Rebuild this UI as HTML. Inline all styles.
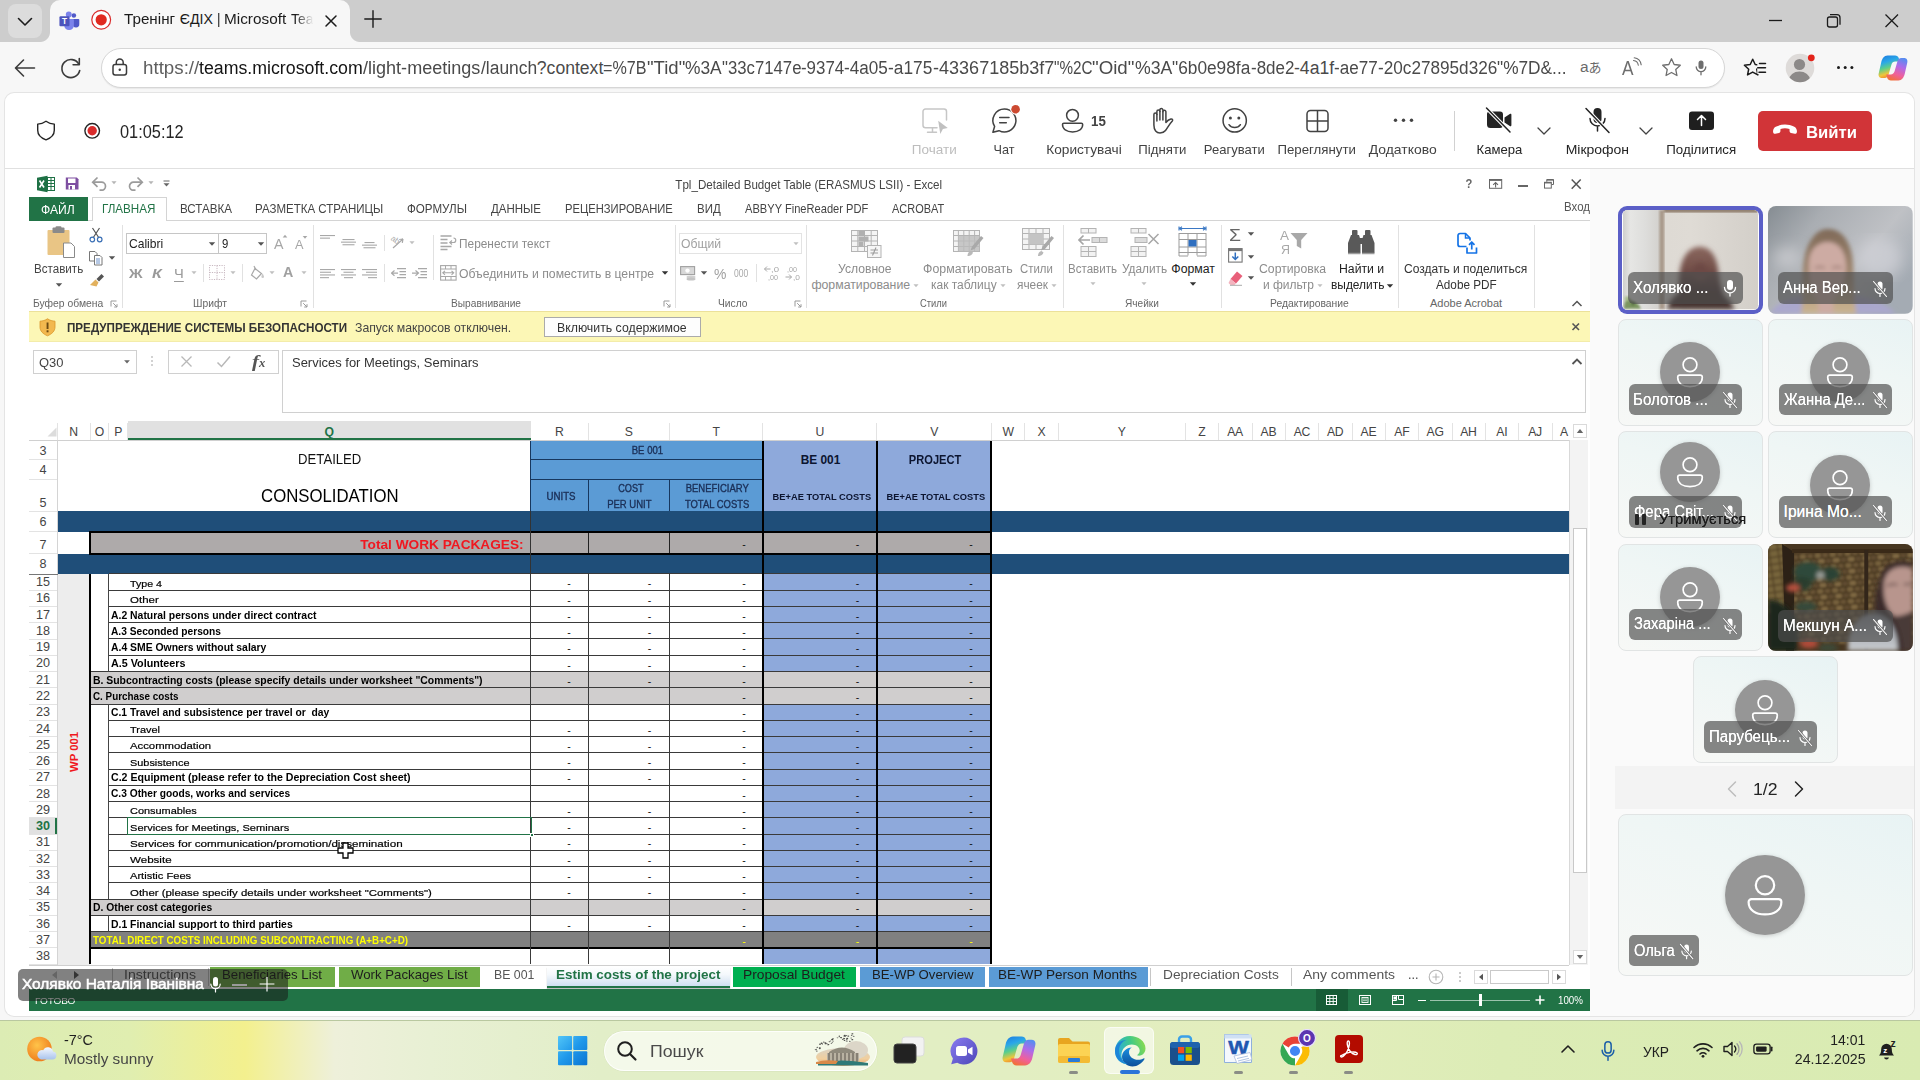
<!DOCTYPE html>
<html lang="uk"><head><meta charset="utf-8"><title>Тренінг ЄДІХ | Microsoft Teams</title>
<style>
html,body{margin:0;padding:0}
body{width:1920px;height:1080px;overflow:hidden;position:relative;background:#d9ebb8;font-family:"Liberation Sans",sans-serif;}
.b{position:absolute;box-sizing:border-box;display:block}
.t{position:absolute;white-space:pre;line-height:1;display:block}
</style></head>
<body>
<!-- s_base -->
<div class="b" style="left:0px;top:1015px;width:1920px;height:65px;background:linear-gradient(90deg,#dcecb4 0px,#e0eeb0 130px,#f3f08e 245px,#eef0da 335px,#e8f0d4 430px,#e2eec8 600px,#e2eec2 1000px,#e3eebc 1300px,#dcecb6 1500px,#d9ebb2 1920px);"></div>
<div class="b" style="left:0px;top:0px;width:1920px;height:42px;background:#cdcdcd;"></div>
<div class="b" style="left:0px;top:42px;width:1920px;height:51px;background:#f7f7f7;"></div>
<div class="b" style="left:0px;top:93px;width:1920px;height:927px;background:#f7f7f7;border-radius:0 0 0 0;"></div>
<div class="b" style="left:50px;top:0px;width:300px;height:42px;background:#f7f7f7;border-radius:10px 10px 0 0;"></div>
<div class="b" style="left:40px;top:32px;width:10px;height:10px;background:radial-gradient(circle at 0 0,#cdcdcd 9.5px,#f7f7f7 10.5px);"></div>
<div class="b" style="left:350px;top:32px;width:10px;height:10px;background:radial-gradient(circle at 100% 0,#cdcdcd 9.5px,#f7f7f7 10.5px);"></div>
<div class="b" style="left:8px;top:4px;width:34px;height:34px;background:#dcdcdc;border-radius:8px;"></div>
<svg class="b" style="left:8px;top:4px;" width="34" height="34" viewBox="0 0 34 34"><path d="M10.5 14.5l6.5 6.5l6.5-6.5" fill="none" stroke="#1b1b1b" stroke-width="1.6" stroke-linecap="round" stroke-linejoin="round"/></svg>
<div class="b" style="left:5px;top:93px;width:1909px;height:923px;background:#fff;border-radius:9px;box-shadow:0 0 0 1px #e4e4e4;"></div>
<div class="b" style="left:0px;top:1020px;width:1920px;height:1px;background:#b9c8a0;"></div>
<!-- s_chrome -->
<svg class="b" style="left:58.5px;top:10.5px;" width="21" height="19.25" viewBox="0 0 24 22"><circle cx="17" cy="5.2" r="2.6" fill="#5059c9"/><path d="M13 9h9.2a1 1 0 0 1 1 1v5.2a3.6 3.6 0 0 1-3.6 3.6h-.4a3.6 3.6 0 0 1-3.600-3.600z" fill="#5059c9"/>
<circle cx="11.2" cy="4" r="3.4" fill="#7b83eb"/><path d="M6.500 9h9.500a1 1 0 0 1 1 1v6.500a5.200 5.200 0 0 1-5.200 5.200h-.6a5.200 5.200 0 0 1-5.200-5.200v-6.500a1 1 0 0 1 .5-1z" fill="#7b83eb"/>
<rect x="0.500" y="6" width="11.500" height="11.500" rx="1.300" fill="#4b53bc"/><text x="6.200" y="15.300" font-size="9.500" font-weight="bold" fill="#fff" text-anchor="middle" font-family="Liberation Sans,sans-serif">T</text></svg>
<svg class="b" style="left:90px;top:9px;" width="22" height="22" viewBox="0 0 22 22"><circle cx="11.200" cy="10.800" r="9.400" fill="#fff" stroke="#d92c2c" stroke-width="1.200"/><circle cx="11.200" cy="10.800" r="5.600" fill="#e02a20"/></svg>
<span class="t" style="left:124.40px;top:12px;font-size:14.2px;color:#1b1b1b;transform:scaleX(1.0719);transform-origin:0 0;">Тренінг </span>
<span class="t" style="left:179.75px;top:12px;font-size:14.2px;color:#1b1b1b;">ЄДІХ </span>
<span class="t" style="left:216.90px;top:12px;font-size:14.2px;color:#1b1b1b;transform:scaleX(0.9432);transform-origin:0 0;">| </span>
<span class="t" style="left:224.10px;top:12px;font-size:14.2px;color:#1b1b1b;transform:scaleX(1.0805);transform-origin:0 0;">Microsoft </span>
<span class="t" style="left:290.60px;top:12px;font-size:14.2px;color:#1b1b1b;transform:scaleX(0.9784);transform-origin:0 0;-webkit-mask-image:linear-gradient(90deg,#000 20%,transparent 100%);mask-image:linear-gradient(90deg,#000 20%,transparent 100%);">Tea</span>
<svg class="b" style="left:322px;top:12px;" width="18" height="18" viewBox="0 0 18 18"><path d="M4 4l10 10M14 4l-10 10" stroke="#1b1b1b" stroke-width="1.500" stroke-linecap="round"/></svg>
<svg class="b" style="left:362px;top:8.3px;" width="22" height="22" viewBox="0 0 22 22"><path d="M11 2.800v16.400M2.800 11h16.400" stroke="#1b1b1b" stroke-width="1.400" stroke-linecap="round"/></svg>
<svg class="b" style="left:1760px;top:8px;" width="150" height="26" viewBox="0 0 150 26"><path d="M9 12.500h13" stroke="#1b1b1b" stroke-width="1.300"/><rect x="67.500" y="9" width="10" height="10" rx="2" fill="none" stroke="#1b1b1b" stroke-width="1.300"/><path d="M70 6.700h7a3 3 0 0 1 3 3v7" fill="none" stroke="#1b1b1b" stroke-width="1.300"/><path d="M125.500 6.500l12.500 12.500M138 6.500l-12.500 12.500" stroke="#1b1b1b" stroke-width="1.300"/></svg>
<svg class="b" style="left:12px;top:55px;" width="28" height="26" viewBox="0 0 28 26"><path d="M22.500 13h-18.500M11.500 5l-8 8l8 8" fill="none" stroke="#3b3b3b" stroke-width="1.600" stroke-linecap="round" stroke-linejoin="round"/></svg>
<svg class="b" style="left:57px;top:54px;" width="28" height="28" viewBox="0 0 28 28"><path d="M21.800 10.200a9 9 0 1 0 .9 6.300" fill="none" stroke="#3b3b3b" stroke-width="1.600" stroke-linecap="round"/><path d="M22.300 4.500v6.200h-6.200" fill="none" stroke="#3b3b3b" stroke-width="1.600" stroke-linecap="round" stroke-linejoin="round"/></svg>
<div class="b" style="left:101px;top:48px;width:1624px;height:40px;background:#fff;border-radius:20px;border:1px solid #d6d6d6;box-shadow:0 1px 1px rgba(0,0,0,.06);"></div>
<svg class="b" style="left:110px;top:57px;" width="20" height="20" viewBox="0 0 20 20"><rect x="3" y="7.500" width="13.500" height="10.500" rx="2.200" fill="none" stroke="#3b3b3b" stroke-width="1.500"/><path d="M6.300 7.500v-2a3.450 3.450 0 0 1 6.900 0v2" fill="none" stroke="#3b3b3b" stroke-width="1.500"/><circle cx="9.750" cy="12.800" r="1.200" fill="#3b3b3b"/></svg>
<span class="t" style="left:143.10px;top:60px;font-size:17.6px;color:#5f5f5f;transform:scaleX(1.0658);transform-origin:0 0;">https://</span>
<span class="t" style="left:199.40px;top:60px;font-size:17.6px;color:#141414;transform:scaleX(1.0089);transform-origin:0 0;">teams.microsoft.com</span>
<span class="t" style="left:363.20px;top:60px;font-size:17.6px;color:#4a4a4a;transform:scaleX(1.0257);transform-origin:0 0;">/light-meetings</span>
<span class="t" style="left:480.60px;top:60px;font-size:17.6px;color:#4a4a4a;transform:scaleX(0.9902);transform-origin:0 0;">/launch</span>
<span class="t" style="left:536.80px;top:60px;font-size:17.6px;color:#4a4a4a;">?context</span>
<span class="t" style="left:603.20px;top:60px;font-size:17.6px;color:#4a4a4a;transform:scaleX(0.9167);transform-origin:0 0;">=%7B</span>
<span class="t" style="left:646.70px;top:60px;font-size:17.6px;color:#4a4a4a;transform:scaleX(1.0553);transform-origin:0 0;">"Tid"</span>
<span class="t" style="left:685.00px;top:60px;font-size:17.6px;color:#4a4a4a;transform:scaleX(0.9872);transform-origin:0 0;">%3A</span>
<span class="t" style="left:721.70px;top:60px;font-size:17.6px;color:#4a4a4a;transform:scaleX(0.9513);transform-origin:0 0;">"33c7147e</span>
<span class="t" style="left:801.20px;top:60px;font-size:17.6px;color:#4a4a4a;transform:scaleX(0.9597);transform-origin:0 0;">-9374</span>
<span class="t" style="left:844.40px;top:60px;font-size:17.6px;color:#4a4a4a;transform:scaleX(0.9730);transform-origin:0 0;">-4a05</span>
<span class="t" style="left:888.20px;top:60px;font-size:17.6px;color:#4a4a4a;transform:scaleX(0.9841);transform-origin:0 0;">-a175</span>
<span class="t" style="left:932.50px;top:60px;font-size:17.6px;color:#4a4a4a;transform:scaleX(1.0251);transform-origin:0 0;">-43367185b3f7</span>
<span class="t" style="left:1053.90px;top:60px;font-size:17.6px;color:#4a4a4a;transform:scaleX(0.8672);transform-origin:0 0;">"%2C</span>
<span class="t" style="left:1092.40px;top:60px;font-size:17.6px;color:#4a4a4a;transform:scaleX(1.0631);transform-origin:0 0;">"Oid"</span>
<span class="t" style="left:1134.80px;top:60px;font-size:17.6px;color:#4a4a4a;transform:scaleX(1.0060);transform-origin:0 0;">%3A</span>
<span class="t" style="left:1172.20px;top:60px;font-size:17.6px;color:#4a4a4a;transform:scaleX(0.9830);transform-origin:0 0;">"6b0e98fa</span>
<span class="t" style="left:1250.50px;top:60px;font-size:17.6px;color:#4a4a4a;transform:scaleX(0.9663);transform-origin:0 0;">-8de2</span>
<span class="t" style="left:1294.00px;top:60px;font-size:17.6px;color:#4a4a4a;">-4a1f</span>
<span class="t" style="left:1334.00px;top:60px;font-size:17.6px;color:#4a4a4a;transform:scaleX(0.9708);transform-origin:0 0;">-ae77</span>
<span class="t" style="left:1377.70px;top:60px;font-size:17.6px;color:#4a4a4a;transform:scaleX(0.9752);transform-origin:0 0;">-20c27895d326</span>
<span class="t" style="left:1497.00px;top:60px;font-size:17.6px;color:#4a4a4a;transform:scaleX(0.9816);transform-origin:0 0;">"%7D&amp;...</span>
<span class="t" style="left:1580.00px;top:59px;font-size:15.5px;color:#6a6a6a;">a</span>
<span class="t" style="left:1588.50px;top:61px;font-size:13px;color:#6a6a6a;font-family:'Liberation Sans','Noto Sans CJK JP',sans-serif;">あ</span>
<span class="t" style="left:1622.00px;top:59px;font-size:19.5px;color:#6e6e6e;transform:scaleX(0.8841);transform-origin:0 0;">A</span>
<svg class="b" style="left:1631px;top:57px;" width="12" height="12" viewBox="0 0 12 12"><path d="M2.500 3.500a5.500 5.500 0 0 1 4.800 4.800M3.200 .8a8.300 8.300 0 0 1 7 7" fill="none" stroke="#6e6e6e" stroke-width="1.100" stroke-linecap="round"/></svg>
<svg class="b" style="left:1660px;top:56px;" width="23" height="23" viewBox="0 0 23 23"><path d="M11.500 2.800l2.650 5.700l6.150.75l-4.550 4.200l1.200 6.100l-5.450-3.050l-5.450 3.050l1.200-6.100l-4.550-4.200l6.150-.75z" fill="none" stroke="#6e6e6e" stroke-width="1.300" stroke-linejoin="round"/></svg>
<svg class="b" style="left:1692px;top:58px;" width="18" height="20" viewBox="0 0 18 20"><rect x="6.500" y="2.500" width="5" height="8.500" rx="2.500" fill="#6e6e6e"/><path d="M4.200 8.800a4.800 4.800 0 0 0 9.600 0M9 13.800v3" fill="none" stroke="#6e6e6e" stroke-width="1.300" stroke-linecap="round"/></svg>
<svg class="b" style="left:1743px;top:56px;" width="26" height="24" viewBox="0 0 26 24"><path d="M9.700 3.200l2.500 5.300l5.800.7l-4.300 4l1.150 5.750l-5.150-2.850l-5.150 2.850l1.150-5.750l-4.300-4l5.800-.7z" fill="none" stroke="#1b1b1b" stroke-width="1.500" stroke-linejoin="round"/><rect x="14.300" y="4.500" width="9" height="13.500" fill="#f7f7f7"/><path d="M16.500 7.400h6M14.800 11.800h7.700M16 16.200h6.500" stroke="#1b1b1b" stroke-width="1.500" stroke-linecap="round"/></svg>
<svg class="b" style="left:1785px;top:53px;" width="30" height="30" viewBox="0 0 30 30"><defs><clipPath id="pc"><circle cx="15" cy="15" r="14.300"/></clipPath></defs><circle cx="15" cy="15" r="14.300" fill="#dedbd9"/><g clip-path="url(#pc)"><circle cx="14.500" cy="11.500" r="5.600" fill="#8c8988"/><ellipse cx="14.500" cy="27" rx="10.500" ry="8.500" fill="#8c8988"/></g><circle cx="26.300" cy="4.800" r="3.400" fill="#e3241b"/></svg>
<svg class="b" style="left:1835px;top:62px;" width="20" height="10" viewBox="0 0 20 10"><circle cx="3.500" cy="5.500" r="1.500" fill="#1b1b1b"/><circle cx="10.200" cy="5.500" r="1.500" fill="#1b1b1b"/><circle cx="16.900" cy="5.500" r="1.500" fill="#1b1b1b"/></svg>
<svg class="b" style="left:1878px;top:54px;" width="30" height="28" viewBox="0 0 30 28"><defs><linearGradient id="cg1" x1=".2" y1="0" x2=".5" y2="1"><stop offset="0" stop-color="#1f7fe0"/><stop offset=".3" stop-color="#2aa7e8"/><stop offset=".55" stop-color="#5ccf8a"/><stop offset=".8" stop-color="#f0c53a"/><stop offset="1" stop-color="#f07a2a"/></linearGradient><linearGradient id="cg2" x1=".7" y1="0" x2=".3" y2="1"><stop offset="0" stop-color="#5a8cf0"/><stop offset=".35" stop-color="#b06ae8"/><stop offset=".7" stop-color="#f0609a"/><stop offset="1" stop-color="#f2703a"/></linearGradient></defs>
<path d="M9.500 1.500h7.500c2 0 3.200 1 3.800 2.800l1 3.200h-4.500c-2 0-3.300 1.200-3.900 3.200l-2.800 9.800c-.6 2-1.800 3.500-4 3.500h-2.600c-2.800 0-4-2.200-3.200-5l2.500-11c.8-3.200 2.800-6.500 6.200-6.500z" fill="url(#cg1)"/>
<path d="M20.500 26.500h-7.500c-2 0-3.200-1-3.800-2.800l-1-3.200h4.500c2 0 3.300-1.200 3.900-3.200l2.800-9.800c.6-2 1.800-3.500 4-3.500h2.600c2.800 0 4 2.200 3.200 5l-2.500 11c-.8 3.200-2.800 6.500-6.200 6.500z" fill="url(#cg2)"/></svg>
<!-- s_teams -->
<div class="b" style="left:5px;top:168px;width:1909px;height:1px;background:#e0e0e0;"></div>
<svg class="b" style="left:34px;top:118px;" width="24" height="24" viewBox="0 0 24 24"><path d="M12 3.200c2.600 1.900 5.300 2.700 8.300 2.900v6.200c0 4.600-3.400 7.800-8.300 9.500c-4.900-1.700-8.300-4.900-8.300-9.500v-6.200c3-.2 5.700-1 8.300-2.900z" fill="none" stroke="#242424" stroke-width="1.400" stroke-linejoin="round"/></svg>
<svg class="b" style="left:82px;top:121px;" width="20" height="20" viewBox="0 0 20 20"><circle cx="10.200" cy="9.800" r="7.300" fill="#fff" stroke="#242424" stroke-width="1.400"/><circle cx="10.200" cy="9.800" r="4.700" fill="#d92c2c"/></svg>
<span class="t" style="left:119.70px;top:123px;font-size:18px;color:#242424;transform:scaleX(0.9077);transform-origin:0 0;">01:05:12</span>
<svg class="b" style="left:920px;top:106px;" width="30" height="30" viewBox="0 0 30 30"><path d="M17 21.700h-11.500a2.500 2.500 0 0 1-2.500-2.500v-13.700a2.500 2.500 0 0 1 2.500-2.500h18.500a2.500 2.500 0 0 1 2.500 2.500v8.500" fill="none" stroke="#c6c6c6" stroke-width="1.500" stroke-linecap="round"/><path d="M12.500 22v4M7.500 26.300h9" stroke="#c6c6c6" stroke-width="1.500" stroke-linecap="round"/><path d="M18.200 14.800l9.600 7.300l-4.900 .8l-2.600 5z" fill="#c0c0c0"/></svg>
<span class="t" style="left:912.22px;top:143px;font-size:13.4px;color:#bdbdbd;transform:scaleX(1.0100);transform-origin:50% 0;">Почати</span>
<svg class="b" style="left:989px;top:104px;" width="34" height="32" viewBox="0 0 34 32"><path d="M15.400 5a11.500 11.500 0 1 1-5.400 21.650l-6.100 1.600l1.700-5.800a11.500 11.500 0 0 1 9.800-17.450z" fill="none" stroke="#424242" stroke-width="1.500" stroke-linejoin="round"/><path d="M10.700 13.500h9.300M10.700 18.800h6.600" stroke="#424242" stroke-width="1.500" stroke-linecap="round"/><circle cx="26.600" cy="5.300" r="5.400" fill="#fff"/><circle cx="26.600" cy="5.300" r="4.300" fill="#cc4a31"/></svg>
<span class="t" style="left:992.89px;top:143px;font-size:13.4px;color:#424242;transform:scaleX(0.9448);transform-origin:50% 0;">Чат</span>
<svg class="b" style="left:1058px;top:106px;" width="30" height="30" viewBox="0 0 30 30"><circle cx="14.500" cy="9.300" r="5.900" fill="none" stroke="#424242" stroke-width="1.500"/><path d="M5.900 17.200h17.400a1.400 1.400 0 0 1 1.400 1.400c0 4.500-4 7.400-10.100 7.400s-10.100-2.900-10.100-7.400a1.400 1.400 0 0 1 1.400-1.400z" fill="none" stroke="#424242" stroke-width="1.500"/></svg>
<span class="t" style="left:1090.50px;top:114px;font-size:14px;color:#424242;font-weight:bold;transform:scaleX(0.9504);transform-origin:0 0;">15</span>
<span class="t" style="left:1046.71px;top:143px;font-size:13.4px;color:#424242;transform:scaleX(1.0207);transform-origin:50% 0;">Користувачі</span>
<svg class="b" style="left:1150px;top:105px;" width="26" height="30" viewBox="0 0 26 30"><path d="M3.900 20V9.600a1.500 1.500 0 0 1 3 0V6.400a1.500 1.500 0 0 1 3 0V5a1.500 1.500 0 0 1 3 0V6.800a1.500 1.500 0 0 1 3 0V17.500c1.300-1.700 3-3 5-3.500c1.500-.3 2.200 .9 1.400 2c-3 3.200-4.500 6.500-6.800 9.500c-1.300 1.700-3 2.400-5.500 2.400c-3.500 0-6.100-2.500-6.100-7.900z" fill="none" stroke="#424242" stroke-width="1.500" stroke-linejoin="round"/><path d="M6.900 9.600V16M9.900 6.400V15M12.900 6.800V15" stroke="#424242" stroke-width="1.500" stroke-linecap="round"/></svg>
<span class="t" style="left:1138.15px;top:143px;font-size:13.4px;color:#424242;transform:scaleX(0.9855);transform-origin:50% 0;">Підняти</span>
<svg class="b" style="left:1219px;top:106px;" width="32" height="32" viewBox="0 0 32 32"><circle cx="15.700" cy="14.400" r="11.650" fill="none" stroke="#424242" stroke-width="1.500"/><circle cx="11.400" cy="12.100" r="1.500" fill="#424242"/><circle cx="19.800" cy="12.100" r="1.500" fill="#424242"/><path d="M10 18.700c1.300 1.900 3.300 2.900 5.700 2.900s4.400-1 5.700-2.900" fill="none" stroke="#424242" stroke-width="1.500" stroke-linecap="round"/></svg>
<span class="t" style="left:1203.20px;top:143px;font-size:13.4px;color:#424242;transform:scaleX(0.9746);transform-origin:50% 0;">Реагувати</span>
<svg class="b" style="left:1302px;top:106px;" width="32" height="32" viewBox="0 0 32 32"><rect x="5" y="4.500" width="21" height="21" rx="3.500" fill="none" stroke="#424242" stroke-width="1.500"/><path d="M15.500 4.500v21M5 15h21" stroke="#424242" stroke-width="1.500"/></svg>
<span class="t" style="left:1277.31px;top:143px;font-size:13.4px;color:#424242;transform:scaleX(0.9889);transform-origin:50% 0;">Переглянути</span>
<svg class="b" style="left:1392px;top:114px;" width="24" height="12" viewBox="0 0 24 12"><circle cx="3.500" cy="6.300" r="1.700" fill="#424242"/><circle cx="11.500" cy="6.300" r="1.700" fill="#424242"/><circle cx="19.500" cy="6.300" r="1.700" fill="#424242"/></svg>
<span class="t" style="left:1370.31px;top:143px;font-size:13.4px;color:#424242;transform:scaleX(1.0400);transform-origin:50% 0;">Додатково</span>
<div class="b" style="left:1453.5px;top:111px;width:1px;height:40px;background:#d1d1d1;"></div>
<svg class="b" style="left:1484px;top:105px;" width="32" height="30" viewBox="0 0 32 30"><path d="M5.500 6.500h10.500a3 3 0 0 1 3 3v10.500a3 3 0 0 1-3 3h-9.500a3.500 3.500 0 0 1-3.500-3.500v-10.500a2.500 2.500 0 0 1 2.500-2.500z" fill="#242424"/><path d="M20.500 12.500l5.300-3.600a1 1 0 0 1 1.600.8v10.600a1 1 0 0 1-1.600.8l-5.300-3.600z" fill="#242424"/><path d="M2.500 3l23.500 24" stroke="#fff" stroke-width="3.600" stroke-linecap="round"/><path d="M2.500 3l23.500 24" stroke="#242424" stroke-width="1.500" stroke-linecap="round"/></svg>
<span class="t" style="left:1475.99px;top:143px;font-size:13.4px;color:#242424;transform:scaleX(0.9780);transform-origin:50% 0;">Камера</span>
<svg class="b" style="left:1536px;top:125px;" width="16" height="12" viewBox="0 0 16 12"><path d="M2 3l6 6l6-6" fill="none" stroke="#424242" stroke-width="1.300" stroke-linecap="round" stroke-linejoin="round"/></svg>
<svg class="b" style="left:1582px;top:105px;" width="32" height="30" viewBox="0 0 32 30"><rect x="11.500" y="3" width="8" height="15" rx="4" fill="#242424"/><path d="M8 13.500a7.500 7.500 0 0 0 15 0M15.500 21v5" fill="none" stroke="#242424" stroke-width="1.500" stroke-linecap="round"/><path d="M4 3.500l23 24" stroke="#fff" stroke-width="3.600" stroke-linecap="round"/><path d="M4 3.500l23 24" stroke="#242424" stroke-width="1.500" stroke-linecap="round"/></svg>
<span class="t" style="left:1567.21px;top:143px;font-size:13.4px;color:#242424;transform:scaleX(1.0447);transform-origin:50% 0;">Мікрофон</span>
<svg class="b" style="left:1638px;top:125px;" width="16" height="12" viewBox="0 0 16 12"><path d="M2 3l6 6l6-6" fill="none" stroke="#424242" stroke-width="1.300" stroke-linecap="round" stroke-linejoin="round"/></svg>
<svg class="b" style="left:1688px;top:110px;" width="28" height="22" viewBox="0 0 28 22"><rect x="1" y="1.500" width="25" height="18.500" rx="3" fill="#1f1f1f"/><path d="M13.500 15.500v-9.500M9.500 9.500l4-4l4 4" fill="none" stroke="#fff" stroke-width="1.500" stroke-linecap="round" stroke-linejoin="round"/></svg>
<span class="t" style="left:1666.47px;top:143px;font-size:13.4px;color:#242424;transform:scaleX(0.9933);transform-origin:50% 0;">Поділитися</span>
<div class="b" style="left:1758px;top:111px;width:114px;height:40px;background:#d13438;border-radius:5px;"></div>
<svg class="b" style="left:1771px;top:119px;" width="30" height="22" viewBox="0 0 30 22"><path d="M2.200 13.500c-.5-2.200.3-4.500 2.500-5.700c6-3 12.600-3 18.600 0c2.200 1.200 3 3.500 2.500 5.700c-.2 1-1.100 1.500-2.100 1.300l-3.700-.9c-.8-.2-1.400-.9-1.400-1.700l-.1-2.100c-2.900-1-6.100-1-9 0l-.1 2.100c0 .8-.6 1.500-1.400 1.700l-3.700.9c-1 .2-1.900-.3-2.100-1.300z" fill="#fff"/></svg>
<span class="t" style="left:1806.00px;top:125px;font-size:16.6px;color:#fff;font-weight:bold;transform:scaleX(1.0052);transform-origin:0 0;">Вийти</span>
<!-- s_excel_top -->
<div class="b" style="left:29px;top:173px;width:1561px;height:838px;background:#fff;"></div>
<svg class="b" style="left:36px;top:175px;" width="20" height="18" viewBox="0 0 20 18"><path d="M1 2.800l10.500-2v16.400l-10.500-2z" fill="#1e7145"/><rect x="11.500" y="2.500" width="7" height="13" fill="#fff" stroke="#1e7145" stroke-width="1"/><path d="M12 5.500h6M12 8.500h6M12 11.500h6M15 3v12" stroke="#1e7145" stroke-width="1"/><path d="M3.500 5.500l4.500 7M8 5.500l-4.500 7" stroke="#fff" stroke-width="1.600"/></svg>
<svg class="b" style="left:65px;top:177px;" width="14" height="13" viewBox="0 0 14 13"><path d="M.8.500h11l1.700 1.700v10.300h-12.700z" fill="#7e4fa1"/><rect x="3" y="1.500" width="7.500" height="4.500" fill="#fff"/><rect x="3.500" y="8" width="6.500" height="4.500" fill="#fff"/><rect x="5" y="9" width="2" height="3.500" fill="#7e4fa1"/></svg>
<svg class="b" style="left:91px;top:176px;" width="17" height="15" viewBox="0 0 17 15"><path d="M2 6.200h8.500a4 4 0 0 1 0 8h-2" fill="none" stroke="#9b9b9b" stroke-width="1.700"/><path d="M6.500 1.500l-4.800 4.700l4.800 4.700" fill="none" stroke="#9b9b9b" stroke-width="1.700"/></svg>
<svg class="b" style="left:109.6px;top:180.3px;" width="8" height="6" viewBox="0 0 8 6"><path d="M1.4399999999999995 1.300h5.120000000000001l-2.5600000000000005 2.8600000000000003z" fill="#b5b5b5"/></svg>
<svg class="b" style="left:127px;top:176px;" width="17" height="15" viewBox="0 0 17 15"><path d="M15 6.200h-8.500a4 4 0 0 0 0 8h2" fill="none" stroke="#9b9b9b" stroke-width="1.700"/><path d="M10.500 1.500l4.800 4.700l-4.800 4.700" fill="none" stroke="#9b9b9b" stroke-width="1.700"/></svg>
<svg class="b" style="left:146.6px;top:180.3px;" width="8" height="6" viewBox="0 0 8 6"><path d="M1.4399999999999995 1.300h5.120000000000001l-2.5600000000000005 2.8600000000000003z" fill="#b5b5b5"/></svg>
<svg class="b" style="left:162px;top:180px;" width="9" height="8" viewBox="0 0 9 8"><path d="M1.500 1h6" stroke="#666" stroke-width="1"/><path d="M1.500 3.300h6l-3 3.200z" fill="#666"/></svg>
<span class="t" style="left:671.70px;top:180px;font-size:11.9px;color:#444;transform:scaleX(0.9758);transform-origin:50% 0;">Tpl_Detailed Budget Table (ERASMUS LSII) - Excel</span>
<span class="t" style="left:1464.79px;top:178px;font-size:12.8px;color:#666;font-weight:bold;transform:scaleX(0.8697);transform-origin:50% 0;">?</span>
<svg class="b" style="left:1489px;top:179px;" width="14" height="10" viewBox="0 0 14 10"><rect x=".5" y=".5" width="12.200" height="8.800" fill="none" stroke="#666"/><path d="M.5 1.200h12.200" stroke="#666" stroke-width="1.400"/><path d="M6.600 8.500v-4.800M4.200 5.800l2.400-2.300l2.400 2.300" fill="none" stroke="#666" stroke-width="1.100"/></svg>
<div class="b" style="left:1517.5px;top:185px;width:10px;height:1.9px;background:#666;"></div>
<svg class="b" style="left:1544px;top:179px;" width="11" height="10" viewBox="0 0 11 10"><path d="M2.800 2.800v-2.300h6.700v5h-2" fill="none" stroke="#666"/><path d="M2.800 1h6.700" stroke="#666" stroke-width="1.300"/><rect x=".5" y="3.300" width="6.800" height="5.800" fill="#fff" stroke="#666"/><path d="M.5 3.800h6.800" stroke="#666" stroke-width="1.300"/></svg>
<svg class="b" style="left:1570px;top:177.5px;" width="12" height="12" viewBox="0 0 12 12"><path d="M1.700 1.500l9 9.200M10.700 1.500l-9 9.200" stroke="#555" stroke-width="1.500"/></svg>
<div class="b" style="left:29px;top:220px;width:1561px;height:1px;background:#d4d4d4;"></div>
<div class="b" style="left:29px;top:197px;width:58.8px;height:23.7px;background:#217346;"></div>
<div class="b" style="left:92px;top:197px;width:75px;height:24px;background:#fff;border:1px solid #d4d4d4;border-bottom:none;"></div>
<span class="t" style="left:41.20px;top:205px;font-size:11.9px;color:#fff;transform:scaleX(1.0216);transform-origin:0 0;">ФАЙЛ</span>
<span class="t" style="left:102.00px;top:204px;font-size:11.9px;color:#217346;transform:scaleX(0.9783);transform-origin:0 0;">ГЛАВНАЯ</span>
<span class="t" style="left:179.60px;top:204px;font-size:11.9px;color:#444;transform:scaleX(0.9764);transform-origin:0 0;">ВСТАВКА</span>
<span class="t" style="left:255.00px;top:204px;font-size:11.9px;color:#444;transform:scaleX(0.9686);transform-origin:0 0;">РАЗМЕТКА СТРАНИЦЫ</span>
<span class="t" style="left:407.00px;top:204px;font-size:11.9px;color:#444;transform:scaleX(0.9752);transform-origin:0 0;">ФОРМУЛЫ</span>
<span class="t" style="left:490.80px;top:204px;font-size:11.9px;color:#444;transform:scaleX(0.9679);transform-origin:0 0;">ДАННЫЕ</span>
<span class="t" style="left:564.60px;top:204px;font-size:11.9px;color:#444;transform:scaleX(0.9428);transform-origin:0 0;">РЕЦЕНЗИРОВАНИЕ</span>
<span class="t" style="left:696.70px;top:204px;font-size:11.9px;color:#444;transform:scaleX(0.9654);transform-origin:0 0;">ВИД</span>
<span class="t" style="left:744.60px;top:204px;font-size:11.9px;color:#444;transform:scaleX(0.9344);transform-origin:0 0;">ABBYY FineReader PDF</span>
<span class="t" style="left:891.70px;top:204px;font-size:11.9px;color:#444;transform:scaleX(0.9233);transform-origin:0 0;">ACROBAT</span>
<span class="t" style="left:1563.70px;top:201px;font-size:12.2px;color:#555;transform:scaleX(0.9420);transform-origin:0 0;">Вход</span>
<div class="b" style="left:122.4px;top:225px;width:1px;height:83px;background:#e1e1e1;"></div>
<div class="b" style="left:313px;top:225px;width:1px;height:83px;background:#e1e1e1;"></div>
<div class="b" style="left:674.8px;top:225px;width:1px;height:83px;background:#e1e1e1;"></div>
<div class="b" style="left:806px;top:225px;width:1px;height:83px;background:#e1e1e1;"></div>
<div class="b" style="left:1062.6px;top:225px;width:1px;height:83px;background:#e1e1e1;"></div>
<div class="b" style="left:1221.4px;top:225px;width:1px;height:83px;background:#e1e1e1;"></div>
<div class="b" style="left:1398.2px;top:225px;width:1px;height:83px;background:#e1e1e1;"></div>
<div class="b" style="left:1533.5px;top:225px;width:1px;height:83px;background:#e1e1e1;"></div>
<svg class="b" style="left:46px;top:226px;" width="30" height="33" viewBox="0 0 30 33"><rect x="1.500" y="4" width="22" height="25" rx="1" fill="#e9c585"/><rect x="6.500" y="1.500" width="12" height="5.500" rx="1" fill="#8a8a8a"/><rect x="9.500" y=".3" width="6" height="3" rx="1.200" fill="#8a8a8a"/><path d="M17.500 17h7.500l3.500 3.500v11h-11z" fill="#fff" stroke="#8a8a8a" stroke-width="1"/></svg>
<span class="t" style="left:34.20px;top:263px;font-size:12.3px;color:#444;transform:scaleX(0.9436);transform-origin:0 0;">Вставить</span>
<svg class="b" style="left:55px;top:281.5px;" width="8" height="6" viewBox="0 0 8 6"><path d="M0.7999999999999998 1.300h6.4l-3.2 3.5z" fill="#555"/></svg>
<svg class="b" style="left:89px;top:227px;" width="14" height="16" viewBox="0 0 14 16"><path d="M3.500 1l6.500 10M10.500 1l-6.500 10" stroke="#555" stroke-width="1.200"/><circle cx="3.300" cy="12.500" r="2.300" fill="none" stroke="#3a6fb5" stroke-width="1.200"/><circle cx="10.700" cy="12.500" r="2.300" fill="none" stroke="#3a6fb5" stroke-width="1.200"/></svg>
<svg class="b" style="left:88px;top:250px;" width="16" height="16" viewBox="0 0 16 16"><path d="M1.500 1.500h5.500l2 2v7.500h-7.500z" fill="#fff" stroke="#777" stroke-width="1"/><path d="M6.500 5.500h5.500l2 2v7.500h-7.500z" fill="#fff" stroke="#777" stroke-width="1"/><path d="M8 9h4M8 11h4M8 13h4" stroke="#5b87c5" stroke-width=".9"/></svg>
<svg class="b" style="left:108px;top:255px;" width="8" height="6" viewBox="0 0 8 6"><path d="M0.7999999999999998 1.300h6.4l-3.2 3.5z" fill="#555"/></svg>
<svg class="b" style="left:89px;top:273px;" width="16" height="15" viewBox="0 0 16 15"><path d="M12.500 1l2.500 2.500l-5 5l-2.500-2.500z" fill="#555"/><path d="M6.500 6.500l3 3l-2 4l-6.500-1.500z" fill="#e2b15d"/></svg>
<span class="t" style="left:32.50px;top:298px;font-size:11px;color:#666;transform:scaleX(0.9392);transform-origin:0 0;">Буфер обмена</span>
<svg class="b" style="left:110px;top:300px;" width="8" height="8" viewBox="0 0 8 8"><path d="M1 1h5.500M1 1v5.500" stroke="#999" stroke-width="1" fill="none"/><path d="M3.200 3.200l3.800 3.800M7 4.200v2.800h-2.800" stroke="#999" stroke-width="1" fill="none"/></svg>
<div class="b" style="left:126px;top:232.5px;width:92.5px;height:21.5px;background:#fff;border:1px solid #c6c6c6;"></div>
<div class="b" style="left:217.5px;top:232.5px;width:49.5px;height:21.5px;background:#fff;border:1px solid #c6c6c6;"></div>
<span class="t" style="left:128.70px;top:238px;font-size:12.2px;color:#222;transform:scaleX(0.9891);transform-origin:0 0;">Calibri</span>
<svg class="b" style="left:207.9px;top:240.5px;" width="8" height="6" viewBox="0 0 8 6"><path d="M0.7999999999999998 1.300h6.4l-3.2 3.5z" fill="#555"/></svg>
<span class="t" style="left:221.70px;top:238px;font-size:12.2px;color:#222;transform:scaleX(0.9285);transform-origin:0 0;">9</span>
<svg class="b" style="left:256.6px;top:240.5px;" width="8" height="6" viewBox="0 0 8 6"><path d="M0.7999999999999998 1.300h6.4l-3.2 3.5z" fill="#555"/></svg>
<span class="t" style="left:273.80px;top:236px;font-size:15px;color:#a6a6a6;transform:scaleX(0.9495);transform-origin:0 0;">A</span>
<svg class="b" style="left:282px;top:234px;" width="6" height="5" viewBox="0 0 6 5"><path d="M3 .8l2.300 2.800h-4.600z" fill="#a6a6a6"/></svg>
<span class="t" style="left:294.60px;top:238px;font-size:13.5px;color:#a6a6a6;transform:scaleX(0.9439);transform-origin:0 0;">A</span>
<svg class="b" style="left:302px;top:235px;" width="6" height="5" viewBox="0 0 6 5"><path d="M3 3.800l2.300-2.800h-4.600z" fill="#a6a6a6"/></svg>
<span class="t" style="left:129.40px;top:267px;font-size:13.5px;color:#9a9a9a;font-weight:bold;transform:scaleX(1.1146);transform-origin:0 0;">Ж</span>
<span class="t" style="left:152.40px;top:267px;font-size:13.5px;color:#9a9a9a;font-weight:bold;font-style:italic;transform:scaleX(1.1808);transform-origin:0 0;">К</span>
<span class="t" style="left:173.80px;top:267px;font-size:13.5px;color:#9a9a9a;transform:scaleX(1.0892);transform-origin:0 0;border-bottom:1.300px solid #9a9a9a;padding-bottom:0;">Ч</span>
<svg class="b" style="left:190px;top:270px;" width="8" height="6" viewBox="0 0 8 6"><path d="M1.4399999999999995 1.300h5.120000000000001l-2.5600000000000005 2.8600000000000003z" fill="#c0c0c0"/></svg>
<div class="b" style="left:203px;top:264px;width:1px;height:18px;background:#e1e1e1;"></div>
<svg class="b" style="left:209px;top:265px;" width="16" height="15" viewBox="0 0 16 15"><rect x=".5" y=".5" width="15" height="14" fill="none" stroke="#c8b8c0" stroke-dasharray="1.200 1.200"/><path d="M8 .5v14M.5 7.500h15" stroke="#c8b8c0" stroke-dasharray="1.200 1.200"/></svg>
<svg class="b" style="left:228.6px;top:270px;" width="8" height="6" viewBox="0 0 8 6"><path d="M1.4399999999999995 1.300h5.120000000000001l-2.5600000000000005 2.8600000000000003z" fill="#c0c0c0"/></svg>
<div class="b" style="left:242px;top:264px;width:1px;height:18px;background:#e1e1e1;"></div>
<svg class="b" style="left:250px;top:265px;" width="15" height="15" viewBox="0 0 15 15"><path d="M5 3.500l6.500 5l-5 5.500l-5-4z" fill="none" stroke="#a8a8a8" stroke-width="1.200"/><path d="M4 1l2 4" stroke="#a8a8a8" stroke-width="1.200"/><path d="M12.500 8.500c1 1.500 1.500 2.500 1.500 3.300a1.300 1.300 0 0 1-2.600 0c0-.8.300-1.800 1.100-3.300z" fill="#c9c9c9"/></svg>
<svg class="b" style="left:268px;top:270px;" width="8" height="6" viewBox="0 0 8 6"><path d="M1.4399999999999995 1.300h5.120000000000001l-2.5600000000000005 2.8600000000000003z" fill="#c0c0c0"/></svg>
<span class="t" style="left:283.20px;top:264px;font-size:15px;color:#a0a0a0;font-weight:bold;transform:scaleX(0.9508);transform-origin:0 0;">A</span>
<svg class="b" style="left:299.7px;top:270px;" width="8" height="6" viewBox="0 0 8 6"><path d="M1.4399999999999995 1.300h5.120000000000001l-2.5600000000000005 2.8600000000000003z" fill="#c0c0c0"/></svg>
<span class="t" style="left:192.80px;top:298px;font-size:11px;color:#666;transform:scaleX(0.9367);transform-origin:0 0;">Шрифт</span>
<svg class="b" style="left:300.4px;top:300px;" width="8" height="8" viewBox="0 0 8 8"><path d="M1 1h5.500M1 1v5.500" stroke="#999" stroke-width="1" fill="none"/><path d="M3.200 3.200l3.800 3.800M7 4.200v2.800h-2.800" stroke="#999" stroke-width="1" fill="none"/></svg>
<svg class="b" style="left:320px;top:235px;" width="15" height="7.2" viewBox="0 0 15 7.2"><rect x="0" y="0.0" width="15" height="1.100" fill="#a8a8a8"/><rect x="0" y="2.6" width="10" height="1.100" fill="#a8a8a8"/></svg>
<svg class="b" style="left:341px;top:239px;" width="15" height="9.8" viewBox="0 0 15 9.8"><rect x="1.5" y="0.0" width="12" height="1.100" fill="#a8a8a8"/><rect x="0.0" y="2.6" width="15" height="1.100" fill="#a8a8a8"/><rect x="1.5" y="5.2" width="12" height="1.100" fill="#a8a8a8"/></svg>
<svg class="b" style="left:362.4px;top:242px;" width="15" height="9.8" viewBox="0 0 15 9.8"><rect x="2.5" y="0.0" width="10" height="1.100" fill="#a8a8a8"/><rect x="0.0" y="2.6" width="15" height="1.100" fill="#a8a8a8"/><rect x="1.5" y="5.2" width="12" height="1.100" fill="#a8a8a8"/></svg>
<div class="b" style="left:383.5px;top:235px;width:1px;height:16px;background:#e1e1e1;"></div>
<div class="b" style="left:383.5px;top:264px;width:1px;height:18px;background:#e1e1e1;"></div>
<svg class="b" style="left:390px;top:233px;" width="16" height="17" viewBox="0 0 16 17"><text x="0" y="9" font-size="8" fill="#a8a8a8" font-family="Liberation Sans,sans-serif" transform="rotate(35 4 8)">ab</text><path d="M3 15l10-9M13 6l-3.800.5M13 6l-.7 3.800" stroke="#a8a8a8" stroke-width="1.200" fill="none"/></svg>
<svg class="b" style="left:408px;top:240px;" width="8" height="6" viewBox="0 0 8 6"><path d="M1.4399999999999995 1.300h5.120000000000001l-2.5600000000000005 2.8600000000000003z" fill="#c0c0c0"/></svg>
<svg class="b" style="left:320px;top:269px;" width="15" height="12.8" viewBox="0 0 15 12.8"><rect x="0" y="0.0" width="15" height="1.100" fill="#a8a8a8"/><rect x="0" y="2.7" width="11" height="1.100" fill="#a8a8a8"/><rect x="0" y="5.4" width="15" height="1.100" fill="#a8a8a8"/><rect x="0" y="8.100000000000001" width="9" height="1.100" fill="#a8a8a8"/></svg>
<svg class="b" style="left:341px;top:269px;" width="15" height="12.8" viewBox="0 0 15 12.8"><rect x="0.0" y="0.0" width="15" height="1.100" fill="#a8a8a8"/><rect x="2.5" y="2.7" width="10" height="1.100" fill="#a8a8a8"/><rect x="0.0" y="5.4" width="15" height="1.100" fill="#a8a8a8"/><rect x="3.0" y="8.100000000000001" width="9" height="1.100" fill="#a8a8a8"/></svg>
<svg class="b" style="left:362.4px;top:269px;" width="15" height="12.8" viewBox="0 0 15 12.8"><rect x="0" y="0.0" width="15" height="1.100" fill="#a8a8a8"/><rect x="4" y="2.7" width="11" height="1.100" fill="#a8a8a8"/><rect x="0" y="5.4" width="15" height="1.100" fill="#a8a8a8"/><rect x="6" y="8.100000000000001" width="9" height="1.100" fill="#a8a8a8"/></svg>
<svg class="b" style="left:391px;top:268px;" width="15" height="11" viewBox="0 0 15 11"><path d="M6 .6h9M8.500 3.600h6.500M8.500 6.600h6.500M6 9.600h9" stroke="#a8a8a8" stroke-width="1.100"/><path d="M7 5.100h-6.500M3.500 2.500l-3 2.600l3 2.600" stroke="#a8a8a8" stroke-width="1.200" fill="none"/></svg>
<svg class="b" style="left:411.6px;top:268px;" width="15" height="11" viewBox="0 0 15 11"><path d="M6 .6h9M8.500 3.600h6.500M8.500 6.600h6.500M6 9.600h9" stroke="#a8a8a8" stroke-width="1.100"/><path d="M0 5.100h6.500M3.500 2.500l3 2.600l-3 2.600" stroke="#a8a8a8" stroke-width="1.200" fill="none"/></svg>
<div class="b" style="left:433px;top:235px;width:1px;height:45px;background:#e1e1e1;"></div>
<svg class="b" style="left:440px;top:235px;" width="17" height="16" viewBox="0 0 17 16"><path d="M.5 1h11M.5 4.500h7M.5 8h7M.5 11.500h11M.5 14.500h7" stroke="#a8a8a8" stroke-width="1.300"/><path d="M10 7.500h3.500a2 2 0 0 0 0-4.500M12 5.500l-2.200 2l2.200 2" fill="none" stroke="#a8a8a8" stroke-width="1.200"/></svg>
<span class="t" style="left:458.60px;top:238px;font-size:12.3px;color:#8c8c8c;transform:scaleX(0.9651);transform-origin:0 0;">Перенести текст</span>
<svg class="b" style="left:440px;top:265px;" width="17" height="16" viewBox="0 0 17 16"><rect x=".6" y=".6" width="15.500" height="14.500" fill="none" stroke="#a8a8a8" stroke-width="1.100"/><path d="M.6 4h15.500M.6 11.500h15.500M5.500.6v3.400M11 .6v3.400M5.500 11.500v3.600M11 11.500v3.600" stroke="#a8a8a8" stroke-width="1"/><path d="M3 7.800h10.500M5 5.800l-2.200 2l2.200 2M11.500 5.800l2.200 2l-2.200 2" stroke="#a8a8a8" stroke-width="1.100" fill="none"/></svg>
<span class="t" style="left:458.60px;top:268px;font-size:12.3px;color:#8c8c8c;transform:scaleX(0.9922);transform-origin:0 0;">Объединить и поместить в центре</span>
<svg class="b" style="left:660.7px;top:270px;" width="8" height="6" viewBox="0 0 8 6"><path d="M0.7999999999999998 1.300h6.4l-3.2 3.5z" fill="#333"/></svg>
<span class="t" style="left:451.40px;top:298px;font-size:11px;color:#666;transform:scaleX(0.9245);transform-origin:0 0;">Выравнивание</span>
<svg class="b" style="left:662.9px;top:300px;" width="8" height="8" viewBox="0 0 8 8"><path d="M1 1h5.500M1 1v5.500" stroke="#999" stroke-width="1" fill="none"/><path d="M3.200 3.200l3.800 3.800M7 4.200v2.800h-2.800" stroke="#999" stroke-width="1" fill="none"/></svg>
<div class="b" style="left:679.3px;top:232.5px;width:122.5px;height:21.5px;background:#fff;border:1px solid #e3e3e3;"></div>
<span class="t" style="left:681.20px;top:238px;font-size:12.3px;color:#a0a0a0;transform:scaleX(0.9908);transform-origin:0 0;">Общий</span>
<svg class="b" style="left:791.6px;top:240.5px;" width="8" height="6" viewBox="0 0 8 6"><path d="M1.4399999999999995 1.300h5.120000000000001l-2.5600000000000005 2.8600000000000003z" fill="#c0c0c0"/></svg>
<svg class="b" style="left:680px;top:266px;" width="18" height="15" viewBox="0 0 18 15"><rect x=".6" y=".6" width="14" height="8" fill="#d8d8d8" stroke="#a0a0a0" stroke-width="1.100"/><circle cx="7.500" cy="4.600" r="2.200" fill="#fff"/><ellipse cx="11" cy="11" rx="4.500" ry="1.500" fill="#d0d0d0"/><ellipse cx="11" cy="13" rx="4.500" ry="1.500" fill="#c4c4c4"/></svg>
<svg class="b" style="left:700.4px;top:270px;" width="8" height="6" viewBox="0 0 8 6"><path d="M0.7999999999999998 1.300h6.4l-3.2 3.5z" fill="#555"/></svg>
<span class="t" style="left:714.30px;top:267px;font-size:14.5px;color:#a0a0a0;transform:scaleX(0.9618);transform-origin:0 0;">%</span>
<span class="t" style="left:734.40px;top:269px;font-size:10px;color:#a8a8a8;transform:scaleX(0.8511);transform-origin:0 0;">000</span>
<div class="b" style="left:756px;top:264px;width:1px;height:18px;background:#e1e1e1;"></div>
<span class="t" style="left:771.00px;top:266px;font-size:7.5px;color:#a8a8a8;transform:scaleX(1.2790);transform-origin:0 0;">,0</span>
<span class="t" style="left:768.00px;top:274px;font-size:7.5px;color:#a8a8a8;transform:scaleX(0.9591);transform-origin:0 0;">,00</span>
<svg class="b" style="left:764px;top:266px;" width="7" height="6" viewBox="0 0 7 6"><path d="M6.500 3h-6M3 .5l-2.500 2.500l2.500 2.500" stroke="#a8a8a8" fill="none"/></svg>
<span class="t" style="left:787.00px;top:266px;font-size:7.5px;color:#a8a8a8;transform:scaleX(0.9591);transform-origin:0 0;">,00</span>
<span class="t" style="left:793.00px;top:274px;font-size:7.5px;color:#a8a8a8;transform:scaleX(1.1191);transform-origin:0 0;">,0</span>
<svg class="b" style="left:785px;top:274px;" width="7" height="6" viewBox="0 0 7 6"><path d="M.5 3h6M4 .5l2.500 2.500l-2.500 2.500" stroke="#a8a8a8" fill="none"/></svg>
<span class="t" style="left:718.00px;top:298px;font-size:11px;color:#666;transform:scaleX(0.9325);transform-origin:0 0;">Число</span>
<svg class="b" style="left:793.8px;top:300px;" width="8" height="8" viewBox="0 0 8 8"><path d="M1 1h5.500M1 1v5.500" stroke="#999" stroke-width="1" fill="none"/><path d="M3.200 3.200l3.800 3.800M7 4.200v2.800h-2.800" stroke="#999" stroke-width="1" fill="none"/></svg>
<svg class="b" style="left:851px;top:230px;" width="31" height="29" viewBox="0 0 31 29"><rect x=".5" y=".5" width="26" height="21" fill="#f4f4f4" stroke="#b4b4b4"/><path d="M6.8 .5v21" stroke="#b4b4b4"/><path d="M13.5 .5v21" stroke="#b4b4b4"/><path d="M20.2 .5v21" stroke="#b4b4b4"/><path d="M.5 5.5h26" stroke="#b4b4b4"/><path d="M.5 11.0h26" stroke="#b4b4b4"/><path d="M.5 16.5h26" stroke="#b4b4b4"/><rect x="7.500" y="1" width="6.500" height="5" fill="#b0b0b0"/><rect x="7.500" y="6.500" width="10" height="5" fill="#b0b0b0"/><rect x="7.500" y="12" width="5" height="5" fill="#b0b0b0"/><rect x="16.500" y="15.500" width="13.500" height="12" fill="#f6f6f6" stroke="#b4b4b4"/><path d="M19.500 20h7.500M19.500 23h7.500M25 17.500l-3.500 8" stroke="#9c9c9c" stroke-width="1.100"/></svg>
<span class="t" style="left:838.30px;top:263px;font-size:12.3px;color:#8c8c8c;transform:scaleX(0.9870);transform-origin:0 0;">Условное</span>
<span class="t" style="left:811.40px;top:279px;font-size:12.3px;color:#8c8c8c;">форматирование</span>
<svg class="b" style="left:912px;top:282.5px;" width="8" height="6" viewBox="0 0 8 6"><path d="M1.4399999999999995 1.300h5.120000000000001l-2.5600000000000005 2.8600000000000003z" fill="#c0c0c0"/></svg>
<svg class="b" style="left:953px;top:230px;" width="33" height="29" viewBox="0 0 33 29"><rect x=".5" y=".5" width="26" height="21" fill="#f4f4f4" stroke="#b4b4b4"/><path d="M5.4 .5v21" stroke="#b4b4b4"/><path d="M10.8 .5v21" stroke="#b4b4b4"/><path d="M16.2 .5v21" stroke="#b4b4b4"/><path d="M21.6 .5v21" stroke="#b4b4b4"/><path d="M.5 5.5h26" stroke="#b4b4b4"/><path d="M.5 11.0h26" stroke="#b4b4b4"/><path d="M.5 16.5h26" stroke="#b4b4b4"/><rect x="6" y="6" width="20.500" height="15.500" fill="#bcbcbc" opacity=".8"/><path d="M30.500 8l-9 11l-4 1.500l1.500-4l9-10.500z" fill="#a9a9a9"/><path d="M18 21c-2 .5-3.500 2-3.500 5c2.500 0 5-1 5.500-3.500z" fill="#b9b9b9"/></svg>
<span class="t" style="left:922.50px;top:263px;font-size:12.3px;color:#8c8c8c;transform:scaleX(1.0050);transform-origin:0 0;">Форматировать</span>
<span class="t" style="left:931.30px;top:279px;font-size:12.3px;color:#8c8c8c;transform:scaleX(0.9753);transform-origin:0 0;">как таблицу</span>
<svg class="b" style="left:998.8px;top:282.5px;" width="8" height="6" viewBox="0 0 8 6"><path d="M1.4399999999999995 1.300h5.120000000000001l-2.5600000000000005 2.8600000000000003z" fill="#c0c0c0"/></svg>
<svg class="b" style="left:1022px;top:228px;" width="34" height="31" viewBox="0 0 34 31"><rect x=".5" y=".5" width="27" height="21" fill="#f4f4f4" stroke="#b4b4b4"/><path d="M7.0 .5v21" stroke="#b4b4b4"/><path d="M14.0 .5v21" stroke="#b4b4b4"/><path d="M21.0 .5v21" stroke="#b4b4b4"/><path d="M.5 5.5h27" stroke="#b4b4b4"/><path d="M.5 11.0h27" stroke="#b4b4b4"/><path d="M.5 16.5h27" stroke="#b4b4b4"/><rect x="6.500" y="5.500" width="15" height="11" fill="#c4c4c4"/><path d="M32 10l-9 11l-4 1.500l1.500-4l9-10.500z" fill="#a9a9a9"/><path d="M19.500 23c-2 .5-3.500 2-3.500 5c2.500 0 5-1 5.500-3.500z" fill="#b9b9b9"/></svg>
<span class="t" style="left:1020.30px;top:263px;font-size:12.3px;color:#8c8c8c;transform:scaleX(0.9256);transform-origin:0 0;">Стили</span>
<span class="t" style="left:1017.30px;top:279px;font-size:12.3px;color:#8c8c8c;transform:scaleX(0.9648);transform-origin:0 0;">ячеек</span>
<svg class="b" style="left:1049.8px;top:282.5px;" width="8" height="6" viewBox="0 0 8 6"><path d="M1.4399999999999995 1.300h5.120000000000001l-2.5600000000000005 2.8600000000000003z" fill="#c0c0c0"/></svg>
<span class="t" style="left:920.30px;top:298px;font-size:11px;color:#666;transform:scaleX(0.8488);transform-origin:0 0;">Стили</span>
<svg class="b" style="left:1078px;top:228px;" width="30" height="29" viewBox="0 0 30 29"><rect x="3" y=".5" width="15" height="4.500" fill="#f2f2f2" stroke="#b4b4b4"/><path d="M10.500 .5v4.500" stroke="#b4b4b4"/><rect x="14" y="9.500" width="15" height="5" fill="#dcdcdc" stroke="#b4b4b4"/><path d="M21.500 9.500v5" stroke="#b4b4b4"/><rect x="3" y="18.500" width="15" height="10" fill="#f2f2f2" stroke="#b4b4b4"/><path d="M10.500 18.500v10M3 23.500h15" stroke="#b4b4b4"/><path d="M12 12h-10.500M5.500 7.500l-4.500 4.500l4.500 4.500" fill="none" stroke="#a6a6a6" stroke-width="1.700"/></svg>
<span class="t" style="left:1068.30px;top:263px;font-size:12.3px;color:#8c8c8c;transform:scaleX(0.9398);transform-origin:0 0;">Вставить</span>
<svg class="b" style="left:1089px;top:281px;" width="8" height="6" viewBox="0 0 8 6"><path d="M1.4399999999999995 1.300h5.120000000000001l-2.5600000000000005 2.8600000000000003z" fill="#c0c0c0"/></svg>
<svg class="b" style="left:1130px;top:228px;" width="30" height="29" viewBox="0 0 30 29"><rect x="1" y=".5" width="15" height="4.500" fill="#f2f2f2" stroke="#b4b4b4"/><path d="M8.500 .5v4.500" stroke="#b4b4b4"/><rect x="5" y="9.500" width="12" height="5" fill="#dcdcdc" stroke="#b4b4b4"/><rect x="1" y="18.500" width="15" height="10" fill="#f2f2f2" stroke="#b4b4b4"/><path d="M8.500 18.500v10M1 23.500h15" stroke="#b4b4b4"/><path d="M18.500 6l10 10M28.500 6l-10 10" stroke="#a6a6a6" stroke-width="1.500"/></svg>
<span class="t" style="left:1121.70px;top:263px;font-size:12.3px;color:#8c8c8c;transform:scaleX(0.9625);transform-origin:0 0;">Удалить</span>
<svg class="b" style="left:1140px;top:281px;" width="8" height="6" viewBox="0 0 8 6"><path d="M1.4399999999999995 1.300h5.120000000000001l-2.5600000000000005 2.8600000000000003z" fill="#c0c0c0"/></svg>
<svg class="b" style="left:1178px;top:226px;" width="30" height="32" viewBox="0 0 30 32"><path d="M1 2.500h27M1 .5v4M28 .5v4M4 .8l-2.500 1.700l2.500 1.700M25 .8l2.500 1.700l-2.500 1.700" stroke="#3b78c4" stroke-width="1.100" fill="none"/><rect x="1" y="7.500" width="27" height="19" fill="#fff" stroke="#9c9c9c"/><path d="M10 7.500v22M19 7.500v22M1 13.500h27M1 21h27" stroke="#9c9c9c"/><rect x="10.500" y="14" width="8" height="6.500" fill="#2f6fc0"/><path d="M1 26.500v3.500h9M19 30h9v-3.500" stroke="#9c9c9c" fill="none"/></svg>
<span class="t" style="left:1171.30px;top:263px;font-size:12.3px;color:#222;">Формат</span>
<svg class="b" style="left:1189px;top:281px;" width="8" height="6" viewBox="0 0 8 6"><path d="M0.7999999999999998 1.300h6.4l-3.2 3.5z" fill="#333"/></svg>
<span class="t" style="left:1125.20px;top:298px;font-size:11px;color:#666;transform:scaleX(0.9161);transform-origin:0 0;">Ячейки</span>
<span class="t" style="left:1229.00px;top:228px;font-size:16px;color:#666;transform:scaleX(1.2132);transform-origin:0 0;">Σ</span>
<svg class="b" style="left:1246.6px;top:230.5px;" width="8" height="6" viewBox="0 0 8 6"><path d="M0.7999999999999998 1.300h6.4l-3.2 3.5z" fill="#555"/></svg>
<svg class="b" style="left:1228px;top:248px;" width="15" height="15" viewBox="0 0 15 15"><rect x=".6" y=".6" width="13.500" height="13.500" fill="#fff" stroke="#777" stroke-width="1.100"/><rect x=".6" y=".6" width="13.500" height="2.500" fill="#777"/><path d="M7.300 4.500v7M4.300 8.500l3 3l3-3" fill="none" stroke="#2f6fc0" stroke-width="1.500"/></svg>
<svg class="b" style="left:1246.6px;top:253.5px;" width="8" height="6" viewBox="0 0 8 6"><path d="M0.7999999999999998 1.300h6.4l-3.2 3.5z" fill="#555"/></svg>
<svg class="b" style="left:1228px;top:270px;" width="16" height="16" viewBox="0 0 16 16"><path d="M9 1.500l5.500 4.500l-6.500 7.500l-5.500-4.500z" fill="#e8607a"/><path d="M2.500 9l5.500 4.500l-1.500 1.500h-4l-2-2z" fill="#f3b4bf"/><path d="M2 15.300h12" stroke="#aaa" stroke-width="1"/></svg>
<svg class="b" style="left:1246.6px;top:275px;" width="8" height="6" viewBox="0 0 8 6"><path d="M0.7999999999999998 1.300h6.4l-3.2 3.5z" fill="#555"/></svg>
<span class="t" style="left:1280.00px;top:229px;font-size:13px;color:#a8a8a8;transform:scaleX(1.0379);transform-origin:0 0;">А</span>
<span class="t" style="left:1281.00px;top:243px;font-size:13px;color:#a8a8a8;transform:scaleX(0.9586);transform-origin:0 0;">Я</span>
<svg class="b" style="left:1290px;top:232px;" width="18" height="18" viewBox="0 0 18 18"><path d="M.5 1h17l-6.300 7v8.500l-4.400-2.500v-6z" fill="#a8a8a8"/></svg>
<span class="t" style="left:1259.30px;top:263px;font-size:12.3px;color:#8c8c8c;transform:scaleX(0.9940);transform-origin:0 0;">Сортировка</span>
<span class="t" style="left:1263.00px;top:279px;font-size:12.3px;color:#8c8c8c;transform:scaleX(0.9737);transform-origin:0 0;">и фильтр</span>
<svg class="b" style="left:1316px;top:282.5px;" width="8" height="6" viewBox="0 0 8 6"><path d="M1.4399999999999995 1.300h5.120000000000001l-2.5600000000000005 2.8600000000000003z" fill="#c0c0c0"/></svg>
<svg class="b" style="left:1347px;top:229px;" width="29" height="26" viewBox="0 0 29 26"><rect x="5" y="1" width="5.500" height="6" rx="1" fill="#595959"/><rect x="18" y="1" width="5.500" height="6" rx="1" fill="#595959"/><path d="M4 6h8l1.500 5v13h-12.500v-10z" fill="#595959"/><path d="M24.500 6h-8l-1.500 5v13h12.500v-10z" fill="#595959"/><rect x="12" y="9" width="4.500" height="6" fill="#595959"/><path d="M1 24.500h12.500M15 24.500h12.500" stroke="#9c9c9c" stroke-width="1.500"/></svg>
<span class="t" style="left:1339.00px;top:263px;font-size:12.3px;color:#222;transform:scaleX(0.9959);transform-origin:0 0;">Найти и</span>
<span class="t" style="left:1330.80px;top:279px;font-size:12.3px;color:#222;transform:scaleX(0.9696);transform-origin:0 0;">выделить</span>
<svg class="b" style="left:1386px;top:282.5px;" width="8" height="6" viewBox="0 0 8 6"><path d="M0.7999999999999998 1.300h6.4l-3.2 3.5z" fill="#333"/></svg>
<span class="t" style="left:1270.40px;top:298px;font-size:11px;color:#666;transform:scaleX(0.9404);transform-origin:0 0;">Редактирование</span>
<svg class="b" style="left:1456px;top:232px;" width="22" height="23" viewBox="0 0 22 23"><path d="M10.500 14.500h-6.500a2 2 0 0 1-2-2v-9a2 2 0 0 1 2-2h5.500l4.500 4.500v2.500" fill="none" stroke="#1473e6" stroke-width="1.700" stroke-linejoin="round"/><path d="M9.500 1.500v4.500h4.500" fill="none" stroke="#1473e6" stroke-width="1.500"/><path d="M11 15.500v5.500h9.500v-5.500M15.750 17.500v-7M13 12.800l2.750-2.800l2.750 2.800" fill="none" stroke="#1473e6" stroke-width="1.700" stroke-linejoin="round"/></svg>
<span class="t" style="left:1403.70px;top:263px;font-size:12.3px;color:#333;transform:scaleX(0.9771);transform-origin:0 0;">Создать и поделиться</span>
<span class="t" style="left:1435.80px;top:279px;font-size:12.3px;color:#333;transform:scaleX(0.9546);transform-origin:0 0;">Adobe PDF</span>
<span class="t" style="left:1430.00px;top:298px;font-size:11px;color:#666;">Adobe Acrobat</span>
<svg class="b" style="left:1571px;top:299px;" width="12" height="9" viewBox="0 0 12 9"><path d="M1.500 7l4.500-4.500l4.500 4.500" fill="none" stroke="#555" stroke-width="1.500"/></svg>
<div class="b" style="left:29px;top:311px;width:1561px;height:31px;background:#fcf7b6;border-top:1px solid #ece19a;border-bottom:1px solid #f3ecaa;"></div>
<svg class="b" style="left:39px;top:318px;" width="17" height="19" viewBox="0 0 17 19"><path d="M8.500 .8c2.300 1.600 4.800 2.200 7.500 2.400v5.800c0 4-3 7-7.500 8.800c-4.500-1.800-7.500-4.800-7.500-8.800v-5.800c2.700-.2 5.200-.8 7.500-2.400z" fill="#f2b84f" stroke="#d9962a" stroke-width=".8"/><rect x="7.600" y="4.500" width="1.900" height="6.500" fill="#6b4a12"/><rect x="7.600" y="12.300" width="1.900" height="2" fill="#6b4a12"/></svg>
<span class="t" style="left:66.70px;top:323px;font-size:11.9px;color:#333;font-weight:bold;transform:scaleX(0.9786);transform-origin:0 0;">ПРЕДУПРЕЖДЕНИЕ СИСТЕМЫ БЕЗОПАСНОСТИ</span>
<span class="t" style="left:355.40px;top:323px;font-size:11.9px;color:#444;transform:scaleX(1.0313);transform-origin:0 0;">Запуск макросов отключен.</span>
<div class="b" style="left:543.8px;top:317px;width:157.5px;height:20px;background:#fdfdfd;border:1px solid #ababab;"></div>
<span class="t" style="left:557.00px;top:323px;font-size:11.9px;color:#333;transform:scaleX(1.0348);transform-origin:0 0;">Включить содержимое</span>
<svg class="b" style="left:1571px;top:322px;" width="10" height="10" viewBox="0 0 10 10"><path d="M1.500 1.500l6.500 6.500M8 1.500l-6.500 6.500" stroke="#555" stroke-width="1.600"/></svg>
<div class="b" style="left:33px;top:350px;width:104px;height:23.5px;background:#fff;border:1px solid #d0d0d0;"></div>
<span class="t" style="left:38.80px;top:357px;font-size:12.3px;color:#444;transform:scaleX(1.0538);transform-origin:0 0;">Q30</span>
<svg class="b" style="left:123px;top:359px;" width="8" height="6" viewBox="0 0 8 6"><path d="M1.1199999999999997 1.300h5.760000000000001l-2.8800000000000003 3.18z" fill="#666"/></svg>
<svg class="b" style="left:150px;top:355px;" width="4" height="12" viewBox="0 0 4 12"><circle cx="2" cy="2" r=".8" fill="#999"/><circle cx="2" cy="6" r=".8" fill="#999"/><circle cx="2" cy="10" r=".8" fill="#999"/></svg>
<div class="b" style="left:167.5px;top:350px;width:111px;height:23.5px;background:#fff;border:1px solid #d0d0d0;"></div>
<svg class="b" style="left:180px;top:355px;" width="13" height="13" viewBox="0 0 13 13"><path d="M1.500 1.500l10 10M11.500 1.500l-10 10" stroke="#b8b8b8" stroke-width="1.300"/></svg>
<svg class="b" style="left:216px;top:355px;" width="16" height="13" viewBox="0 0 16 13"><path d="M1.500 7.500l4 4l8.500-10" fill="none" stroke="#b8b8b8" stroke-width="1.500"/></svg>
<span class="t" style="left:251.50px;top:353px;font-size:17.5px;color:#555;font-weight:bold;font-style:italic;transform:scaleX(1.2010);transform-origin:0 0;font-family:'Liberation Serif',serif;">f</span>
<span class="t" style="left:258.80px;top:356px;font-size:13.5px;color:#555;font-weight:bold;font-style:italic;transform:scaleX(0.9323);transform-origin:0 0;font-family:'Liberation Serif',serif;">x</span>
<div class="b" style="left:281.5px;top:350px;width:1304px;height:62.5px;background:#fff;border:1px solid #d0d0d0;"></div>
<span class="t" style="left:291.70px;top:357px;font-size:12.3px;color:#333;transform:scaleX(1.0539);transform-origin:0 0;">Services for Meetings, Seminars</span>
<svg class="b" style="left:1571px;top:357px;" width="12" height="9" viewBox="0 0 12 9"><path d="M1.500 7l4.500-4.500l4.500 4.500" fill="none" stroke="#555" stroke-width="1.800"/></svg>
<!-- s_sheet -->
<div class="b" style="left:29px;top:421px;width:1540px;height:19px;background:#fff;"></div>
<svg class="b" style="left:47px;top:427px;" width="10" height="10" viewBox="0 0 10 10"><path d="M9.500 .5v9h-9z" fill="#dcdcdc"/></svg>
<div class="b" style="left:127.5px;top:421px;width:403.5px;height:19px;background:#e1e1e1;border-bottom:2px solid #217346;"></div>
<span class="t" style="left:69.34px;top:426px;font-size:12.2px;color:#444;">N</span>
<div class="b" style="left:90px;top:423px;width:1px;height:17px;background:#e3e3e3;"></div>
<span class="t" style="left:94.76px;top:426px;font-size:12.2px;color:#444;">O</span>
<div class="b" style="left:108px;top:423px;width:1px;height:17px;background:#e3e3e3;"></div>
<span class="t" style="left:114.18px;top:426px;font-size:12.2px;color:#444;">P</span>
<div class="b" style="left:127px;top:423px;width:1px;height:17px;background:#e3e3e3;"></div>
<span class="t" style="left:555.09px;top:426px;font-size:12.2px;color:#444;">R</span>
<div class="b" style="left:588px;top:423px;width:1px;height:17px;background:#e3e3e3;"></div>
<span class="t" style="left:624.68px;top:426px;font-size:12.2px;color:#444;">S</span>
<div class="b" style="left:669px;top:423px;width:1px;height:17px;background:#e3e3e3;"></div>
<span class="t" style="left:712.52px;top:426px;font-size:12.2px;color:#444;">T</span>
<div class="b" style="left:762px;top:423px;width:1px;height:17px;background:#e3e3e3;"></div>
<span class="t" style="left:815.59px;top:426px;font-size:12.2px;color:#444;">U</span>
<div class="b" style="left:876px;top:423px;width:1px;height:17px;background:#e3e3e3;"></div>
<span class="t" style="left:930.18px;top:426px;font-size:12.2px;color:#444;">V</span>
<div class="b" style="left:991px;top:423px;width:1px;height:17px;background:#e3e3e3;"></div>
<span class="t" style="left:1002.49px;top:426px;font-size:12.2px;color:#444;">W</span>
<div class="b" style="left:1024px;top:423px;width:1px;height:17px;background:#e3e3e3;"></div>
<span class="t" style="left:1037.58px;top:426px;font-size:12.2px;color:#444;">X</span>
<div class="b" style="left:1058px;top:423px;width:1px;height:17px;background:#e3e3e3;"></div>
<span class="t" style="left:1117.78px;top:426px;font-size:12.2px;color:#444;">Y</span>
<div class="b" style="left:1185px;top:423px;width:1px;height:17px;background:#e3e3e3;"></div>
<span class="t" style="left:1198.37px;top:426px;font-size:12.2px;color:#444;">Z</span>
<div class="b" style="left:1218px;top:423px;width:1px;height:17px;background:#e3e3e3;"></div>
<span class="t" style="left:1227.26px;top:426px;font-size:12.2px;color:#444;letter-spacing:-.3px;">AA</span>
<div class="b" style="left:1252px;top:423px;width:1px;height:17px;background:#e3e3e3;"></div>
<span class="t" style="left:1260.56px;top:426px;font-size:12.2px;color:#444;letter-spacing:-.3px;">AB</span>
<div class="b" style="left:1285px;top:423px;width:1px;height:17px;background:#e3e3e3;"></div>
<span class="t" style="left:1293.63px;top:426px;font-size:12.2px;color:#444;letter-spacing:-.3px;">AC</span>
<div class="b" style="left:1318px;top:423px;width:1px;height:17px;background:#e3e3e3;"></div>
<span class="t" style="left:1326.93px;top:426px;font-size:12.2px;color:#444;letter-spacing:-.3px;">AD</span>
<div class="b" style="left:1352px;top:423px;width:1px;height:17px;background:#e3e3e3;"></div>
<span class="t" style="left:1360.56px;top:426px;font-size:12.2px;color:#444;letter-spacing:-.3px;">AE</span>
<div class="b" style="left:1385px;top:423px;width:1px;height:17px;background:#e3e3e3;"></div>
<span class="t" style="left:1394.30px;top:426px;font-size:12.2px;color:#444;letter-spacing:-.3px;">AF</span>
<div class="b" style="left:1418px;top:423px;width:1px;height:17px;background:#e3e3e3;"></div>
<span class="t" style="left:1426.59px;top:426px;font-size:12.2px;color:#444;letter-spacing:-.3px;">AG</span>
<div class="b" style="left:1452px;top:423px;width:1px;height:17px;background:#e3e3e3;"></div>
<span class="t" style="left:1460.23px;top:426px;font-size:12.2px;color:#444;letter-spacing:-.3px;">AH</span>
<div class="b" style="left:1485px;top:423px;width:1px;height:17px;background:#e3e3e3;"></div>
<span class="t" style="left:1496.34px;top:426px;font-size:12.2px;color:#444;letter-spacing:-.3px;">AI</span>
<div class="b" style="left:1518px;top:423px;width:1px;height:17px;background:#e3e3e3;"></div>
<span class="t" style="left:1528.28px;top:426px;font-size:12.2px;color:#444;letter-spacing:-.3px;">AJ</span>
<div class="b" style="left:1552px;top:423px;width:1px;height:17px;background:#e3e3e3;"></div>
<div class="b" style="left:57px;top:423px;width:1px;height:17px;background:#e3e3e3;"></div>
<div class="b" style="left:127px;top:423px;width:1px;height:17px;background:#e3e3e3;"></div>
<span class="t" style="left:324.56px;top:426px;font-size:12.2px;color:#217346;font-weight:bold;">Q</span>
<span class="t" style="left:1560.00px;top:426px;font-size:12.2px;color:#444;">A</span>
<div class="b" style="left:29px;top:440px;width:1540px;height:1px;background:#d0d0d0;"></div>
<span class="t" style="left:39.50px;top:445px;font-size:12.6px;color:#444;">3</span>
<div class="b" style="left:29px;top:459px;width:28px;height:1px;background:#e3e3e3;"></div>
<span class="t" style="left:39.50px;top:464px;font-size:12.6px;color:#444;">4</span>
<div class="b" style="left:29px;top:479px;width:28px;height:1px;background:#e3e3e3;"></div>
<span class="t" style="left:39.50px;top:497px;font-size:12.6px;color:#444;">5</span>
<div class="b" style="left:29px;top:511px;width:28px;height:1px;background:#e3e3e3;"></div>
<span class="t" style="left:39.50px;top:516px;font-size:12.6px;color:#444;">6</span>
<div class="b" style="left:29px;top:531px;width:28px;height:1px;background:#e3e3e3;"></div>
<span class="t" style="left:39.50px;top:539px;font-size:12.6px;color:#444;">7</span>
<div class="b" style="left:29px;top:553px;width:28px;height:1px;background:#e3e3e3;"></div>
<span class="t" style="left:39.50px;top:558px;font-size:12.6px;color:#444;">8</span>
<div class="b" style="left:29px;top:574px;width:28px;height:1px;background:#e3e3e3;"></div>
<span class="t" style="left:35.99px;top:576px;font-size:12.6px;color:#444;">15</span>
<div class="b" style="left:29px;top:590px;width:28px;height:1px;background:#e3e3e3;"></div>
<span class="t" style="left:35.99px;top:592px;font-size:12.6px;color:#444;">16</span>
<div class="b" style="left:29px;top:606px;width:28px;height:1px;background:#e3e3e3;"></div>
<span class="t" style="left:35.99px;top:609px;font-size:12.6px;color:#444;">17</span>
<div class="b" style="left:29px;top:622px;width:28px;height:1px;background:#e3e3e3;"></div>
<span class="t" style="left:35.99px;top:625px;font-size:12.6px;color:#444;">18</span>
<div class="b" style="left:29px;top:639px;width:28px;height:1px;background:#e3e3e3;"></div>
<span class="t" style="left:35.99px;top:641px;font-size:12.6px;color:#444;">19</span>
<div class="b" style="left:29px;top:655px;width:28px;height:1px;background:#e3e3e3;"></div>
<span class="t" style="left:35.99px;top:657px;font-size:12.6px;color:#444;">20</span>
<div class="b" style="left:29px;top:671px;width:28px;height:1px;background:#e3e3e3;"></div>
<span class="t" style="left:35.99px;top:674px;font-size:12.6px;color:#444;">21</span>
<div class="b" style="left:29px;top:687px;width:28px;height:1px;background:#e3e3e3;"></div>
<span class="t" style="left:35.99px;top:690px;font-size:12.6px;color:#444;">22</span>
<div class="b" style="left:29px;top:704px;width:28px;height:1px;background:#e3e3e3;"></div>
<span class="t" style="left:35.99px;top:706px;font-size:12.6px;color:#444;">23</span>
<div class="b" style="left:29px;top:720px;width:28px;height:1px;background:#e3e3e3;"></div>
<span class="t" style="left:35.99px;top:723px;font-size:12.6px;color:#444;">24</span>
<div class="b" style="left:29px;top:736px;width:28px;height:1px;background:#e3e3e3;"></div>
<span class="t" style="left:35.99px;top:739px;font-size:12.6px;color:#444;">25</span>
<div class="b" style="left:29px;top:752px;width:28px;height:1px;background:#e3e3e3;"></div>
<span class="t" style="left:35.99px;top:755px;font-size:12.6px;color:#444;">26</span>
<div class="b" style="left:29px;top:769px;width:28px;height:1px;background:#e3e3e3;"></div>
<span class="t" style="left:35.99px;top:771px;font-size:12.6px;color:#444;">27</span>
<div class="b" style="left:29px;top:785px;width:28px;height:1px;background:#e3e3e3;"></div>
<span class="t" style="left:35.99px;top:788px;font-size:12.6px;color:#444;">28</span>
<div class="b" style="left:29px;top:801px;width:28px;height:1px;background:#e3e3e3;"></div>
<span class="t" style="left:35.99px;top:804px;font-size:12.6px;color:#444;">29</span>
<div class="b" style="left:29px;top:817px;width:28px;height:1px;background:#e3e3e3;"></div>
<div class="b" style="left:29px;top:817.9000000000001px;width:28px;height:16.25999999999999px;background:#e1e1e1;border-right:2px solid #217346;"></div>
<span class="t" style="left:35.99px;top:820px;font-size:12.6px;color:#217346;font-weight:bold;">30</span>
<div class="b" style="left:29px;top:834px;width:28px;height:1px;background:#e3e3e3;"></div>
<span class="t" style="left:35.99px;top:836px;font-size:12.6px;color:#444;">31</span>
<div class="b" style="left:29px;top:850px;width:28px;height:1px;background:#e3e3e3;"></div>
<span class="t" style="left:35.99px;top:853px;font-size:12.6px;color:#444;">32</span>
<div class="b" style="left:29px;top:866px;width:28px;height:1px;background:#e3e3e3;"></div>
<span class="t" style="left:35.99px;top:869px;font-size:12.6px;color:#444;">33</span>
<div class="b" style="left:29px;top:882px;width:28px;height:1px;background:#e3e3e3;"></div>
<span class="t" style="left:35.99px;top:885px;font-size:12.6px;color:#444;">34</span>
<div class="b" style="left:29px;top:899px;width:28px;height:1px;background:#e3e3e3;"></div>
<span class="t" style="left:35.99px;top:901px;font-size:12.6px;color:#444;">35</span>
<div class="b" style="left:29px;top:915px;width:28px;height:1px;background:#e3e3e3;"></div>
<span class="t" style="left:35.99px;top:918px;font-size:12.6px;color:#444;">36</span>
<div class="b" style="left:29px;top:931px;width:28px;height:1px;background:#e3e3e3;"></div>
<span class="t" style="left:35.99px;top:934px;font-size:12.6px;color:#444;">37</span>
<div class="b" style="left:29px;top:947px;width:28px;height:1px;background:#e3e3e3;"></div>
<span class="t" style="left:35.99px;top:950px;font-size:12.6px;color:#444;">38</span>
<div class="b" style="left:29px;top:964px;width:28px;height:1px;background:#e3e3e3;"></div>
<div class="b" style="left:57px;top:440px;width:1px;height:524.5px;background:#d4d4d4;"></div>
<div class="b" style="left:29px;top:574px;width:28.5px;height:1px;background:#777;"></div>
<span class="t" style="left:295.99px;top:452px;font-size:14px;color:#111;transform:scaleX(0.9373);transform-origin:50% 0;">DETAILED</span>
<span class="t" style="left:257.51px;top:488px;font-size:17.5px;color:#000;transform:scaleX(0.9576);transform-origin:50% 0;">CONSOLIDATION</span>
<div class="b" style="left:531px;top:440.5px;width:232px;height:71px;background:#5b9bd5;"></div>
<div class="b" style="left:763px;top:440.5px;width:228.5px;height:71px;background:#8ea9db;"></div>
<div class="b" style="left:531px;top:459px;width:232px;height:1px;background:#17375e;"></div>
<div class="b" style="left:531px;top:479px;width:232px;height:1px;background:#17375e;"></div>
<div class="b" style="left:588px;top:479.5px;width:1px;height:32.0px;background:#17375e;"></div>
<div class="b" style="left:669px;top:479.5px;width:1px;height:32.0px;background:#17375e;"></div>
<div class="b" style="left:530px;top:440.5px;width:1px;height:71.0px;background:#17375e;"></div>
<span class="t" style="left:630.85px;top:446px;font-size:10px;color:#1b2f57;transform:scaleX(0.9542);transform-origin:50% 0;-webkit-text-stroke:.35px #1b2f57;">BE 001</span>
<span class="t" style="left:546.05px;top:492px;font-size:10px;color:#1b2f57;transform:scaleX(0.9700);transform-origin:50% 0;-webkit-text-stroke:.35px #1b2f57;">UNITS</span>
<span class="t" style="left:616.51px;top:484px;font-size:10px;color:#1b2f57;transform:scaleX(0.9144);transform-origin:50% 0;-webkit-text-stroke:.35px #1b2f57;">COST</span>
<span class="t" style="left:605.76px;top:500px;font-size:10px;color:#1b2f57;transform:scaleX(0.9513);transform-origin:50% 0;-webkit-text-stroke:.35px #1b2f57;">PER UNIT</span>
<span class="t" style="left:683.95px;top:484px;font-size:10px;color:#1b2f57;transform:scaleX(0.9504);transform-origin:50% 0;-webkit-text-stroke:.35px #1b2f57;">BENEFICIARY</span>
<span class="t" style="left:682.52px;top:500px;font-size:10px;color:#1b2f57;transform:scaleX(0.9448);transform-origin:50% 0;-webkit-text-stroke:.35px #1b2f57;">TOTAL COSTS</span>
<span class="t" style="left:800.65px;top:455px;font-size:11.9px;color:#0c1530;font-weight:bold;">BE 001</span>
<span class="t" style="left:906.55px;top:455px;font-size:11.9px;color:#0c1530;font-weight:bold;transform:scaleX(0.9340);transform-origin:50% 0;">PROJECT</span>
<span class="t" style="left:769.88px;top:492px;font-size:9.8px;color:#0c1530;font-weight:bold;transform:scaleX(0.9495);transform-origin:50% 0;">BE+AE TOTAL COSTS</span>
<span class="t" style="left:883.63px;top:492px;font-size:9.8px;color:#0c1530;font-weight:bold;transform:scaleX(0.9495);transform-origin:50% 0;">BE+AE TOTAL COSTS</span>
<div class="b" style="left:57.5px;top:511.3px;width:1511.3px;height:20.7px;background:#1f4e79;"></div>
<div class="b" style="left:57.5px;top:553.7px;width:1511.3px;height:20.5px;background:#1f4e79;"></div>
<div class="b" style="left:90px;top:531.7px;width:901.5px;height:22px;background:#aeaaaa;"></div>
<div class="b" style="left:90px;top:531.0px;width:901.5px;height:2px;background:#000;"></div>
<div class="b" style="left:90px;top:552.5px;width:901.5px;height:2px;background:#000;"></div>
<div class="b" style="left:89.45px;top:531px;width:1.7px;height:23.5px;background:#000;"></div>
<div class="b" style="left:530px;top:533px;width:1px;height:20px;background:#222;"></div>
<div class="b" style="left:588px;top:533px;width:1px;height:20px;background:#222;"></div>
<div class="b" style="left:669px;top:533px;width:1px;height:20px;background:#222;"></div>
<span class="t" style="left:361.11px;top:538px;font-size:13.6px;color:#f01820;font-weight:bold;transform:scaleX(1.0044);transform-origin:100% 0;">Total WORK PACKAGES:</span>
<span class="t" style="left:742.25px;top:539px;font-size:10.5px;color:#111;">-</span>
<span class="t" style="left:855.75px;top:539px;font-size:10.5px;color:#111;">-</span>
<span class="t" style="left:969.25px;top:539px;font-size:10.5px;color:#111;">-</span>
<div class="b" style="left:57.5px;top:574px;width:32.5px;height:390.5px;background:#ededed;"></div>
<div class="b" style="left:763px;top:574px;width:228.5px;height:390.24px;background:#8ea9db;"></div>
<span class="t" style="left:130.00px;top:579px;font-size:9.9px;color:#000;transform:scaleX(1.0767);transform-origin:0 0;-webkit-text-stroke:.2px #000;">Type 4</span>
<span class="t" style="left:567.25px;top:578px;font-size:10.5px;color:#111;">-</span>
<span class="t" style="left:647.75px;top:578px;font-size:10.5px;color:#111;">-</span>
<span class="t" style="left:742.25px;top:578px;font-size:10.5px;color:#111;">-</span>
<span class="t" style="left:855.75px;top:578px;font-size:10.5px;color:#111;">-</span>
<span class="t" style="left:969.25px;top:578px;font-size:10.5px;color:#111;">-</span>
<span class="t" style="left:130.00px;top:595px;font-size:9.9px;color:#000;transform:scaleX(1.1632);transform-origin:0 0;-webkit-text-stroke:.2px #000;">Other</span>
<span class="t" style="left:567.25px;top:595px;font-size:10.5px;color:#111;">-</span>
<span class="t" style="left:647.75px;top:595px;font-size:10.5px;color:#111;">-</span>
<span class="t" style="left:742.25px;top:595px;font-size:10.5px;color:#111;">-</span>
<span class="t" style="left:855.75px;top:595px;font-size:10.5px;color:#111;">-</span>
<span class="t" style="left:969.25px;top:595px;font-size:10.5px;color:#111;">-</span>
<span class="t" style="left:111.30px;top:611px;font-size:10px;color:#000;font-weight:bold;transform:scaleX(1.0412);transform-origin:0 0;">A.2 Natural persons under direct contract</span>
<span class="t" style="left:567.25px;top:611px;font-size:10.5px;color:#111;">-</span>
<span class="t" style="left:647.75px;top:611px;font-size:10.5px;color:#111;">-</span>
<span class="t" style="left:742.25px;top:611px;font-size:10.5px;color:#111;">-</span>
<span class="t" style="left:855.75px;top:611px;font-size:10.5px;color:#111;">-</span>
<span class="t" style="left:969.25px;top:611px;font-size:10.5px;color:#111;">-</span>
<span class="t" style="left:111.30px;top:627px;font-size:10px;color:#000;font-weight:bold;transform:scaleX(1.0203);transform-origin:0 0;">A.3 Seconded persons</span>
<span class="t" style="left:567.25px;top:627px;font-size:10.5px;color:#111;">-</span>
<span class="t" style="left:647.75px;top:627px;font-size:10.5px;color:#111;">-</span>
<span class="t" style="left:742.25px;top:627px;font-size:10.5px;color:#111;">-</span>
<span class="t" style="left:855.75px;top:627px;font-size:10.5px;color:#111;">-</span>
<span class="t" style="left:969.25px;top:627px;font-size:10.5px;color:#111;">-</span>
<span class="t" style="left:111.30px;top:643px;font-size:10px;color:#000;font-weight:bold;transform:scaleX(1.0396);transform-origin:0 0;">A.4 SME Owners without salary</span>
<span class="t" style="left:567.25px;top:643px;font-size:10.5px;color:#111;">-</span>
<span class="t" style="left:647.75px;top:643px;font-size:10.5px;color:#111;">-</span>
<span class="t" style="left:742.25px;top:643px;font-size:10.5px;color:#111;">-</span>
<span class="t" style="left:855.75px;top:643px;font-size:10.5px;color:#111;">-</span>
<span class="t" style="left:969.25px;top:643px;font-size:10.5px;color:#111;">-</span>
<span class="t" style="left:111.30px;top:659px;font-size:10px;color:#000;font-weight:bold;transform:scaleX(1.0754);transform-origin:0 0;">A.5 Volunteers</span>
<span class="t" style="left:567.25px;top:660px;font-size:10.5px;color:#111;">-</span>
<span class="t" style="left:647.75px;top:660px;font-size:10.5px;color:#111;">-</span>
<span class="t" style="left:742.25px;top:660px;font-size:10.5px;color:#111;">-</span>
<span class="t" style="left:855.75px;top:660px;font-size:10.5px;color:#111;">-</span>
<span class="t" style="left:969.25px;top:660px;font-size:10.5px;color:#111;">-</span>
<div class="b" style="left:90px;top:671.56px;width:901.5px;height:16.260000000000105px;background:#d0cece;"></div>
<span class="t" style="left:92.50px;top:676px;font-size:10px;color:#000;font-weight:bold;transform:scaleX(1.0416);transform-origin:0 0;">B. Subcontracting costs (please specify details under worksheet "Comments")</span>
<span class="t" style="left:567.25px;top:676px;font-size:10.5px;color:#111;">-</span>
<span class="t" style="left:647.75px;top:676px;font-size:10.5px;color:#111;">-</span>
<span class="t" style="left:742.25px;top:676px;font-size:10.5px;color:#111;">-</span>
<span class="t" style="left:855.75px;top:676px;font-size:10.5px;color:#111;">-</span>
<span class="t" style="left:969.25px;top:676px;font-size:10.5px;color:#111;">-</span>
<div class="b" style="left:90px;top:687.82px;width:901.5px;height:16.25999999999999px;background:#d0cece;"></div>
<span class="t" style="left:92.50px;top:692px;font-size:10px;color:#000;font-weight:bold;transform:scaleX(0.9849);transform-origin:0 0;">C. Purchase costs</span>
<span class="t" style="left:742.25px;top:692px;font-size:10.5px;color:#111;">-</span>
<span class="t" style="left:855.75px;top:692px;font-size:10.5px;color:#111;">-</span>
<span class="t" style="left:969.25px;top:692px;font-size:10.5px;color:#111;">-</span>
<span class="t" style="left:111.30px;top:708px;font-size:10px;color:#000;font-weight:bold;transform:scaleX(1.0309);transform-origin:0 0;">C.1 Travel and subsistence per travel or  day</span>
<span class="t" style="left:742.25px;top:708px;font-size:10.5px;color:#111;">-</span>
<span class="t" style="left:855.75px;top:708px;font-size:10.5px;color:#111;">-</span>
<span class="t" style="left:969.25px;top:708px;font-size:10.5px;color:#111;">-</span>
<span class="t" style="left:130.00px;top:725px;font-size:9.9px;color:#000;transform:scaleX(1.1054);transform-origin:0 0;-webkit-text-stroke:.2px #000;">Travel</span>
<span class="t" style="left:567.25px;top:725px;font-size:10.5px;color:#111;">-</span>
<span class="t" style="left:647.75px;top:725px;font-size:10.5px;color:#111;">-</span>
<span class="t" style="left:742.25px;top:725px;font-size:10.5px;color:#111;">-</span>
<span class="t" style="left:855.75px;top:725px;font-size:10.5px;color:#111;">-</span>
<span class="t" style="left:969.25px;top:725px;font-size:10.5px;color:#111;">-</span>
<span class="t" style="left:130.00px;top:741px;font-size:9.9px;color:#000;transform:scaleX(1.1453);transform-origin:0 0;-webkit-text-stroke:.2px #000;">Accommodation</span>
<span class="t" style="left:567.25px;top:741px;font-size:10.5px;color:#111;">-</span>
<span class="t" style="left:647.75px;top:741px;font-size:10.5px;color:#111;">-</span>
<span class="t" style="left:742.25px;top:741px;font-size:10.5px;color:#111;">-</span>
<span class="t" style="left:855.75px;top:741px;font-size:10.5px;color:#111;">-</span>
<span class="t" style="left:969.25px;top:741px;font-size:10.5px;color:#111;">-</span>
<span class="t" style="left:130.00px;top:758px;font-size:9.9px;color:#000;transform:scaleX(1.1051);transform-origin:0 0;-webkit-text-stroke:.2px #000;">Subsistence</span>
<span class="t" style="left:567.25px;top:757px;font-size:10.5px;color:#111;">-</span>
<span class="t" style="left:647.75px;top:757px;font-size:10.5px;color:#111;">-</span>
<span class="t" style="left:742.25px;top:757px;font-size:10.5px;color:#111;">-</span>
<span class="t" style="left:855.75px;top:757px;font-size:10.5px;color:#111;">-</span>
<span class="t" style="left:969.25px;top:757px;font-size:10.5px;color:#111;">-</span>
<span class="t" style="left:111.30px;top:773px;font-size:10px;color:#000;font-weight:bold;transform:scaleX(1.0592);transform-origin:0 0;">C.2 Equipment (please refer to the Depreciation Cost sheet)</span>
<span class="t" style="left:567.25px;top:773px;font-size:10.5px;color:#111;">-</span>
<span class="t" style="left:647.75px;top:773px;font-size:10.5px;color:#111;">-</span>
<span class="t" style="left:742.25px;top:773px;font-size:10.5px;color:#111;">-</span>
<span class="t" style="left:855.75px;top:773px;font-size:10.5px;color:#111;">-</span>
<span class="t" style="left:969.25px;top:773px;font-size:10.5px;color:#111;">-</span>
<span class="t" style="left:111.30px;top:789px;font-size:10px;color:#000;font-weight:bold;transform:scaleX(1.0204);transform-origin:0 0;">C.3 Other goods, works and services</span>
<span class="t" style="left:742.25px;top:790px;font-size:10.5px;color:#111;">-</span>
<span class="t" style="left:855.75px;top:790px;font-size:10.5px;color:#111;">-</span>
<span class="t" style="left:969.25px;top:790px;font-size:10.5px;color:#111;">-</span>
<span class="t" style="left:130.00px;top:806px;font-size:9.9px;color:#000;transform:scaleX(1.1068);transform-origin:0 0;-webkit-text-stroke:.2px #000;">Consumables</span>
<span class="t" style="left:567.25px;top:806px;font-size:10.5px;color:#111;">-</span>
<span class="t" style="left:647.75px;top:806px;font-size:10.5px;color:#111;">-</span>
<span class="t" style="left:742.25px;top:806px;font-size:10.5px;color:#111;">-</span>
<span class="t" style="left:855.75px;top:806px;font-size:10.5px;color:#111;">-</span>
<span class="t" style="left:969.25px;top:806px;font-size:10.5px;color:#111;">-</span>
<span class="t" style="left:130.00px;top:823px;font-size:9.9px;color:#000;transform:scaleX(1.1200);transform-origin:0 0;-webkit-text-stroke:.2px #000;">Services for Meetings, Seminars</span>
<span class="t" style="left:567.25px;top:822px;font-size:10.5px;color:#111;">-</span>
<span class="t" style="left:647.75px;top:822px;font-size:10.5px;color:#111;">-</span>
<span class="t" style="left:742.25px;top:822px;font-size:10.5px;color:#111;">-</span>
<span class="t" style="left:855.75px;top:822px;font-size:10.5px;color:#111;">-</span>
<span class="t" style="left:969.25px;top:822px;font-size:10.5px;color:#111;">-</span>
<span class="t" style="left:130.00px;top:839px;font-size:9.9px;color:#000;transform:scaleX(1.1798);transform-origin:0 0;-webkit-text-stroke:.2px #000;">Services for communication/promotion/dissemination</span>
<span class="t" style="left:567.25px;top:838px;font-size:10.5px;color:#111;">-</span>
<span class="t" style="left:647.75px;top:838px;font-size:10.5px;color:#111;">-</span>
<span class="t" style="left:742.25px;top:838px;font-size:10.5px;color:#111;">-</span>
<span class="t" style="left:855.75px;top:838px;font-size:10.5px;color:#111;">-</span>
<span class="t" style="left:969.25px;top:838px;font-size:10.5px;color:#111;">-</span>
<span class="t" style="left:130.00px;top:855px;font-size:9.9px;color:#000;transform:scaleX(1.1719);transform-origin:0 0;-webkit-text-stroke:.2px #000;">Website</span>
<span class="t" style="left:567.25px;top:855px;font-size:10.5px;color:#111;">-</span>
<span class="t" style="left:647.75px;top:855px;font-size:10.5px;color:#111;">-</span>
<span class="t" style="left:742.25px;top:855px;font-size:10.5px;color:#111;">-</span>
<span class="t" style="left:855.75px;top:855px;font-size:10.5px;color:#111;">-</span>
<span class="t" style="left:969.25px;top:855px;font-size:10.5px;color:#111;">-</span>
<span class="t" style="left:130.00px;top:871px;font-size:9.9px;color:#000;transform:scaleX(1.1256);transform-origin:0 0;-webkit-text-stroke:.2px #000;">Artistic Fees</span>
<span class="t" style="left:567.25px;top:871px;font-size:10.5px;color:#111;">-</span>
<span class="t" style="left:647.75px;top:871px;font-size:10.5px;color:#111;">-</span>
<span class="t" style="left:742.25px;top:871px;font-size:10.5px;color:#111;">-</span>
<span class="t" style="left:855.75px;top:871px;font-size:10.5px;color:#111;">-</span>
<span class="t" style="left:969.25px;top:871px;font-size:10.5px;color:#111;">-</span>
<span class="t" style="left:130.00px;top:888px;font-size:9.9px;color:#000;transform:scaleX(1.1555);transform-origin:0 0;-webkit-text-stroke:.2px #000;">Other (please specify details under worksheet "Comments")</span>
<span class="t" style="left:567.25px;top:887px;font-size:10.5px;color:#111;">-</span>
<span class="t" style="left:647.75px;top:887px;font-size:10.5px;color:#111;">-</span>
<span class="t" style="left:742.25px;top:887px;font-size:10.5px;color:#111;">-</span>
<span class="t" style="left:855.75px;top:887px;font-size:10.5px;color:#111;">-</span>
<span class="t" style="left:969.25px;top:887px;font-size:10.5px;color:#111;">-</span>
<div class="b" style="left:90px;top:899.2px;width:901.5px;height:16.25999999999999px;background:#d0cece;"></div>
<span class="t" style="left:92.50px;top:903px;font-size:10px;color:#000;font-weight:bold;transform:scaleX(1.0312);transform-origin:0 0;">D. Other cost categories</span>
<span class="t" style="left:742.25px;top:903px;font-size:10.5px;color:#111;">-</span>
<span class="t" style="left:855.75px;top:903px;font-size:10.5px;color:#111;">-</span>
<span class="t" style="left:969.25px;top:903px;font-size:10.5px;color:#111;">-</span>
<span class="t" style="left:111.30px;top:920px;font-size:10px;color:#000;font-weight:bold;transform:scaleX(1.0415);transform-origin:0 0;">D.1 Financial support to third parties</span>
<span class="t" style="left:567.25px;top:920px;font-size:10.5px;color:#111;">-</span>
<span class="t" style="left:647.75px;top:920px;font-size:10.5px;color:#111;">-</span>
<span class="t" style="left:742.25px;top:920px;font-size:10.5px;color:#111;">-</span>
<span class="t" style="left:855.75px;top:920px;font-size:10.5px;color:#111;">-</span>
<span class="t" style="left:969.25px;top:920px;font-size:10.5px;color:#111;">-</span>
<div class="b" style="left:90px;top:931.72px;width:901.5px;height:16.25999999999999px;background:#808080;"></div>
<span class="t" style="left:92.50px;top:936px;font-size:10px;color:#ffff00;font-weight:bold;transform:scaleX(0.9801);transform-origin:0 0;">TOTAL DIRECT COSTS INCLUDING SUBCONTRACTING (A+B+C+D)</span>
<span class="t" style="left:742.25px;top:936px;font-size:10.5px;color:#ffff00;">-</span>
<span class="t" style="left:855.75px;top:936px;font-size:10.5px;color:#ffff00;">-</span>
<span class="t" style="left:969.25px;top:936px;font-size:10.5px;color:#ffff00;">-</span>
<div class="b" style="left:109px;top:573px;width:882.5px;height:1px;background:#3a3a3a;"></div>
<div class="b" style="left:109px;top:590px;width:882.5px;height:1px;background:#3a3a3a;"></div>
<div class="b" style="left:109px;top:606px;width:882.5px;height:1px;background:#3a3a3a;"></div>
<div class="b" style="left:109px;top:622px;width:882.5px;height:1px;background:#3a3a3a;"></div>
<div class="b" style="left:109px;top:638px;width:882.5px;height:1px;background:#3a3a3a;"></div>
<div class="b" style="left:109px;top:655px;width:882.5px;height:1px;background:#3a3a3a;"></div>
<div class="b" style="left:90px;top:671px;width:901.5px;height:1px;background:#3a3a3a;"></div>
<div class="b" style="left:90px;top:687px;width:901.5px;height:1px;background:#3a3a3a;"></div>
<div class="b" style="left:90px;top:704px;width:901.5px;height:1px;background:#3a3a3a;"></div>
<div class="b" style="left:109px;top:720px;width:882.5px;height:1px;background:#3a3a3a;"></div>
<div class="b" style="left:109px;top:736px;width:882.5px;height:1px;background:#3a3a3a;"></div>
<div class="b" style="left:109px;top:752px;width:882.5px;height:1px;background:#3a3a3a;"></div>
<div class="b" style="left:109px;top:769px;width:882.5px;height:1px;background:#3a3a3a;"></div>
<div class="b" style="left:109px;top:785px;width:882.5px;height:1px;background:#3a3a3a;"></div>
<div class="b" style="left:109px;top:801px;width:882.5px;height:1px;background:#3a3a3a;"></div>
<div class="b" style="left:109px;top:817px;width:882.5px;height:1px;background:#3a3a3a;"></div>
<div class="b" style="left:109px;top:834px;width:882.5px;height:1px;background:#3a3a3a;"></div>
<div class="b" style="left:109px;top:850px;width:882.5px;height:1px;background:#3a3a3a;"></div>
<div class="b" style="left:109px;top:866px;width:882.5px;height:1px;background:#3a3a3a;"></div>
<div class="b" style="left:109px;top:882px;width:882.5px;height:1px;background:#3a3a3a;"></div>
<div class="b" style="left:90px;top:899px;width:901.5px;height:1px;background:#3a3a3a;"></div>
<div class="b" style="left:90px;top:915px;width:901.5px;height:1px;background:#3a3a3a;"></div>
<div class="b" style="left:90px;top:931px;width:901.5px;height:1px;background:#3a3a3a;"></div>
<div class="b" style="left:90px;top:947px;width:901.5px;height:1px;background:#3a3a3a;"></div>
<div class="b" style="left:90px;top:947.18px;width:901.5px;height:1.6px;background:#000;"></div>
<div class="b" style="left:108px;top:574.0px;width:1px;height:16.26px;background:#444;"></div>
<div class="b" style="left:108px;top:590.26px;width:1px;height:16.26px;background:#444;"></div>
<div class="b" style="left:108px;top:606.52px;width:1px;height:16.26px;background:#444;"></div>
<div class="b" style="left:108px;top:622.78px;width:1px;height:16.26px;background:#444;"></div>
<div class="b" style="left:108px;top:639.04px;width:1px;height:16.26px;background:#444;"></div>
<div class="b" style="left:108px;top:655.3px;width:1px;height:16.26px;background:#444;"></div>
<div class="b" style="left:108px;top:704.08px;width:1px;height:16.26px;background:#444;"></div>
<div class="b" style="left:108px;top:720.34px;width:1px;height:16.26px;background:#444;"></div>
<div class="b" style="left:108px;top:736.6px;width:1px;height:16.26px;background:#444;"></div>
<div class="b" style="left:108px;top:752.86px;width:1px;height:16.26px;background:#444;"></div>
<div class="b" style="left:108px;top:769.12px;width:1px;height:16.26px;background:#444;"></div>
<div class="b" style="left:108px;top:785.38px;width:1px;height:16.26px;background:#444;"></div>
<div class="b" style="left:108px;top:801.64px;width:1px;height:16.26px;background:#444;"></div>
<div class="b" style="left:108px;top:817.9px;width:1px;height:16.26px;background:#444;"></div>
<div class="b" style="left:108px;top:834.16px;width:1px;height:16.26px;background:#444;"></div>
<div class="b" style="left:108px;top:850.42px;width:1px;height:16.26px;background:#444;"></div>
<div class="b" style="left:108px;top:866.68px;width:1px;height:16.26px;background:#444;"></div>
<div class="b" style="left:108px;top:882.94px;width:1px;height:16.26px;background:#444;"></div>
<div class="b" style="left:108px;top:915.46px;width:1px;height:16.26px;background:#444;"></div>
<div class="b" style="left:530px;top:574px;width:1px;height:390.24px;background:#3a3a3a;"></div>
<div class="b" style="left:588px;top:574px;width:1px;height:390.24px;background:#3a3a3a;"></div>
<div class="b" style="left:669px;top:574px;width:1px;height:390.24px;background:#3a3a3a;"></div>
<div class="b" style="left:89.45px;top:574px;width:1.7px;height:390.24px;background:#000;"></div>
<div class="b" style="left:761.8px;top:440.5px;width:2.4px;height:523.74px;background:#000;"></div>
<div class="b" style="left:875.8px;top:440.5px;width:2.4px;height:523.74px;background:#000;"></div>
<div class="b" style="left:989.7px;top:440.5px;width:2.6px;height:523.74px;background:#000;"></div>
<div class="b" style="left:530px;top:511.3px;width:1px;height:62.7px;background:#333;"></div>
<span class="t" style="left:74px;top:752px;font-size:10.500px;font-weight:bold;color:#f01820;transform:translate(-50%,-50%) rotate(-90deg) scaleX(1.08);">WP 001</span>
<div class="b" style="left:126.5px;top:816.9000000000001px;width:405.5px;height:18.25999999999999px;border:1.600px solid #217346;"></div>
<div class="b" style="left:529.5px;top:832.6600000000001px;width:4.5px;height:4.5px;background:#217346;border:1px solid #fff;"></div>
<svg class="b" style="left:337px;top:842px;" width="17" height="17" viewBox="0 0 17 17"><path d="M6 1h5v5h5v5h-5v5h-5v-5h-5v-5h5z" fill="#fff" stroke="#000" stroke-width="1.300"/></svg>
<div class="b" style="left:29px;top:965.5px;width:1561px;height:46px;background:#fff;"></div>
<div class="b" style="left:1569px;top:421px;width:21px;height:544px;background:#fff;"></div>
<div class="b" style="left:1570px;top:440px;width:18px;height:525px;background:#f3f3f3;"></div>
<div class="b" style="left:1569px;top:440px;width:1px;height:525px;background:#d9d9d9;"></div>
<div class="b" style="left:1573px;top:424px;width:14px;height:14px;background:#fff;border:1px solid #dadada;"></div>
<svg class="b" style="left:1576px;top:428px;" width="8" height="6" viewBox="0 0 8 6"><path d="M4 1l3.200 4h-6.400z" fill="#666"/></svg>
<div class="b" style="left:1573px;top:528px;width:14px;height:345px;background:#fff;border:1px solid #c9c9c9;"></div>
<div class="b" style="left:1573px;top:950px;width:14px;height:14px;background:#fff;border:1px solid #dadada;"></div>
<svg class="b" style="left:1576px;top:954px;" width="8" height="6" viewBox="0 0 8 6"><path d="M4 5l3.200-4h-6.400z" fill="#666"/></svg>
<svg class="b" style="left:50px;top:970px;" width="9" height="10" viewBox="0 0 9 10"><path d="M7 1l-5 4l5 4z" fill="#c0c0c0"/></svg>
<svg class="b" style="left:72px;top:970px;" width="9" height="10" viewBox="0 0 9 10"><path d="M2 1l5 4l-5 4z" fill="#555"/></svg>
<div class="b" style="left:29px;top:965px;width:1540px;height:1px;background:#cfcfcf;"></div>
<div class="b" style="left:112px;top:968px;width:1px;height:18px;background:#c6c6c6;"></div>
<span class="t" style="left:124.00px;top:968px;font-size:13.1px;color:#555;transform:scaleX(1.0749);transform-origin:0 0;">Instructions</span>
<div class="b" style="left:208px;top:968px;width:1px;height:18px;background:#c6c6c6;"></div>
<div class="b" style="left:210.4px;top:967px;width:124.2px;height:19.5px;background:#70ad47;"></div><span class="t" style="left:222.00px;top:968px;font-size:13.1px;color:#1d1d1d;transform:scaleX(1.0098);transform-origin:0 0;">Beneficiaries List</span>
<div class="b" style="left:338.8px;top:967px;width:141.2px;height:19.5px;background:#70ad47;"></div><span class="t" style="left:350.80px;top:968px;font-size:13.1px;color:#1d1d1d;transform:scaleX(1.0102);transform-origin:0 0;">Work Packages List</span>
<span class="t" style="left:493.80px;top:968px;font-size:13.1px;color:#555;transform:scaleX(0.9401);transform-origin:0 0;">BE 001</span>
<div class="b" style="left:546.7px;top:967px;width:183.3px;height:19.5px;background:linear-gradient(#ffffff,#f4f8fc 40%,#cfdff0);height:21px;border-bottom:2px solid #217346;box-shadow:0 1px 1px rgba(0,0,0,.25);"></div><span class="t" style="left:556.30px;top:968px;font-size:13.1px;color:#217346;font-weight:bold;transform:scaleX(1.0272);transform-origin:0 0;">Estim costs of the project</span>
<div class="b" style="left:733.3px;top:967px;width:122.7px;height:19.5px;background:#00b050;"></div><span class="t" style="left:743.00px;top:968px;font-size:13.1px;color:#1d1d1d;transform:scaleX(1.0530);transform-origin:0 0;">Proposal Budget</span>
<div class="b" style="left:860.4px;top:967px;width:124.2px;height:19.5px;background:#5b9bd5;"></div><span class="t" style="left:871.70px;top:968px;font-size:13.1px;color:#1d1d1d;transform:scaleX(1.0065);transform-origin:0 0;">BE-WP Overview</span>
<div class="b" style="left:988.8px;top:967px;width:159.5px;height:19.5px;background:#5b9bd5;"></div><span class="t" style="left:998.30px;top:968px;font-size:13.1px;color:#1d1d1d;transform:scaleX(1.0353);transform-origin:0 0;">BE-WP Person Months</span>
<div class="b" style="left:1150px;top:968px;width:1px;height:18px;background:#c6c6c6;"></div>
<span class="t" style="left:1162.50px;top:968px;font-size:13.1px;color:#555;transform:scaleX(1.0463);transform-origin:0 0;">Depreciation Costs</span>
<div class="b" style="left:1291px;top:968px;width:1px;height:18px;background:#c6c6c6;"></div>
<span class="t" style="left:1303.00px;top:968px;font-size:13.1px;color:#555;transform:scaleX(1.0619);transform-origin:0 0;">Any comments</span>
<span class="t" style="left:1407.50px;top:968px;font-size:13px;color:#444;transform:scaleX(0.9691);transform-origin:0 0;">...</span>
<svg class="b" style="left:1428px;top:969px;" width="16" height="16" viewBox="0 0 16 16"><circle cx="8" cy="8" r="6.800" fill="none" stroke="#b5b5b5" stroke-width="1.100"/><path d="M8 4.500v7M4.500 8h7" stroke="#b5b5b5" stroke-width="1.100"/></svg>
<svg class="b" style="left:1458px;top:971px;" width="4" height="12" viewBox="0 0 4 12"><circle cx="2" cy="2" r=".8" fill="#888"/><circle cx="2" cy="6" r=".8" fill="#888"/><circle cx="2" cy="10" r=".8" fill="#888"/></svg>
<div class="b" style="left:1474px;top:970px;width:14px;height:14px;background:#fff;border:1px solid #dadada;"></div>
<svg class="b" style="left:1478px;top:973px;" width="6" height="8" viewBox="0 0 6 8"><path d="M1 4l4-3.200v6.400z" fill="#555"/></svg>
<div class="b" style="left:1489.5px;top:970px;width:59px;height:14px;background:#fff;border:1px solid #c9c9c9;"></div>
<div class="b" style="left:1552px;top:970px;width:14px;height:14px;background:#fff;border:1px solid #dadada;"></div>
<svg class="b" style="left:1556px;top:973px;" width="6" height="8" viewBox="0 0 6 8"><path d="M5 4l-4-3.200v6.400z" fill="#555"/></svg>
<div class="b" style="left:29px;top:989px;width:1561px;height:22px;background:#217346;"></div>
<span class="t" style="left:34.60px;top:996px;font-size:9.8px;color:#fff;transform:scaleX(1.0259);transform-origin:0 0;">ГОТОВО</span>
<div class="b" style="left:1315.8px;top:989px;width:32.5px;height:22px;background:#185c37;"></div>
<svg class="b" style="left:1326px;top:995px;" width="11" height="10" viewBox="0 0 11 10"><rect x=".5" y=".5" width="10" height="9" fill="none" stroke="#fff"/><path d="M3.800 .5v9M7.200 .5v9M.5 3.500h10M.5 6.500h10" stroke="#fff" stroke-width=".9"/></svg>
<svg class="b" style="left:1359px;top:995px;" width="12" height="10" viewBox="0 0 12 10"><rect x=".5" y=".5" width="11" height="9" fill="none" stroke="#fff"/><rect x="3" y="2.500" width="6" height="5" fill="none" stroke="#fff" stroke-width=".9"/><path d="M4 4h4M4 5.700h4" stroke="#fff" stroke-width=".7"/></svg>
<svg class="b" style="left:1392px;top:995px;" width="12" height="10" viewBox="0 0 12 10"><rect x=".5" y=".5" width="11" height="9" fill="none" stroke="#fff"/><path d="M.5 5.500h4v-5M6.500 .5v4h5" stroke="#fff" fill="none"/><rect x="1.500" y="1.500" width="2.500" height="3" fill="#fff"/></svg>
<div class="b" style="left:1418px;top:999.5px;width:8px;height:1.6px;background:#fff;"></div>
<div class="b" style="left:1430px;top:1000px;width:100px;height:1px;background:#9cc3ad;"></div>
<div class="b" style="left:1478.5px;top:994px;width:3.4px;height:12px;background:#fff;"></div>
<svg class="b" style="left:1535px;top:995px;" width="10" height="10" viewBox="0 0 10 10"><path d="M5 .5v9M.5 5h9" stroke="#fff" stroke-width="1.600"/></svg>
<span class="t" style="left:1558.00px;top:995px;font-size:10.5px;color:#fff;transform:scaleX(0.9309);transform-origin:0 0;">100%</span>
<div class="b" style="left:18px;top:969px;width:270px;height:32px;background:rgba(25,25,25,.55);border-radius:5px;"></div>
<span class="t" style="left:22.00px;top:977px;font-size:14.3px;color:#fff;transform:scaleX(1.0791);transform-origin:0 0;-webkit-text-stroke:.45px #fff;">Холявко Наталія Іванівна</span>
<svg class="b" style="left:209px;top:975.6px;" width="13" height="17" viewBox="0 0 13 17"><rect x="4" y="1" width="5" height="9.500" rx="2.500" fill="#fff"/><path d="M1.800 8a4.700 4.700 0 0 0 9.400 0M6.500 13v3" fill="none" stroke="#fff" stroke-width="1.200" stroke-linecap="round"/></svg>
<div class="b" style="left:231.5px;top:984.3px;width:15px;height:1.3px;background:#9a9a9a;"></div>
<svg class="b" style="left:258.4px;top:975.4px;" width="18" height="18" viewBox="0 0 18 18"><path d="M9 2v14.500M1.600 9h14.800" stroke="#fff" stroke-width="1.150"/></svg>
<!-- s_panel -->
<div class="b" style="left:1590px;top:169px;width:324px;height:847px;background:#fafafa;border-radius:0 0 9px 0;"></div>
<div class="b" style="left:1618.3px;top:206px;width:144.5px;height:108px;background:#5b5fc7;border-radius:9px;"></div>
<div class="b" style="left:1621.9px;top:209.6px;width:137.3px;height:100.8px;background:#fff;border-radius:5.500px;"></div>
<svg class="b" style="left:1622.700px;top:210.400px;border-radius:4.500px;" width="135.700" height="99.200" viewBox="0 0 136 99.400" preserveAspectRatio="none">
<defs><filter id="bl1"><feGaussianBlur stdDeviation="1.300"/></filter><filter id="bl1b"><feGaussianBlur stdDeviation="2.600"/></filter>
<linearGradient id="w1" x1="0" y1="0" x2="1" y2="0"><stop offset="0" stop-color="#dcd8d2"/><stop offset=".5" stop-color="#dfdbd5"/><stop offset="1" stop-color="#d3cfc9"/></linearGradient>
<linearGradient id="h1" x1="0" y1="0" x2="0" y2="1"><stop offset="0" stop-color="#8a675e"/><stop offset=".35" stop-color="#74504a"/><stop offset=".65" stop-color="#4c3331"/><stop offset="1" stop-color="#3a2928"/></linearGradient>
<linearGradient id="l1" x1="0" y1="0" x2="1" y2="0"><stop offset="0" stop-color="#cfcfcd"/><stop offset=".2" stop-color="#e6e6e4"/><stop offset=".6" stop-color="#dddddb"/><stop offset="1" stop-color="#d2d0cc"/></linearGradient></defs>
<rect width="136" height="99.400" fill="url(#w1)"/>
<rect x="0" y="0" width="38" height="99.400" fill="url(#l1)"/>
<rect x="36.500" y="0" width="5" height="99.400" fill="#a8998a" filter="url(#bl1)"/>
<rect x="41" y="-1" width="95" height="3.500" fill="#8a7866" filter="url(#bl1)"/>
<g filter="url(#bl1b)"><path d="M57 99.400c0-12 -2-22 -0.500-34c1.500-16 8-28 19.500-28.500c12-.5 18.500 10 20 27c1 11 4 22 12 35.500z" fill="url(#h1)"/><path d="M44 99.400c2-9 8-15 16-18l34 0c8 4 14 9 18 18z" fill="#45302e"/><ellipse cx="77.500" cy="62" rx="8" ry="9.500" fill="#6d4a44"/></g>
<g filter="url(#bl1)"><path d="M1 99c0-6 2-10 5-12c1 3 3 4 6 5c3 2 5 4 6 7z" fill="#7c9560"/><circle cx="4" cy="89" r="2.500" fill="#a9bd8c"/><circle cx="10" cy="94" r="2" fill="#5d7845"/></g>
</svg>
<div class="b" style="left:1628.3px;top:272px;width:114.5px;height:31.9px;background:rgba(78,78,78,.68);border-radius:6px;"></div><span class="t" style="left:1632.70px;top:280px;font-size:15.6px;color:#fff;transform:scaleX(0.9753);transform-origin:0 0;text-shadow:0 0 .5px #fff;">Холявко ...</span><svg class="b" style="left:1722px;top:279px;" width="16" height="18" viewBox="0 0 16 18"><rect x="5" y="1" width="6" height="10" rx="3" fill="#fff"/><path d="M2.500 8.500a5.500 5.500 0 0 0 11 0M8 14v3" fill="none" stroke="#fff" stroke-width="1.300" stroke-linecap="round"/></svg>
<svg class="b" style="left:1768.100px;top:206.100px;border-radius:8px;" width="144.700" height="107.800" viewBox="0 0 145 108">
<defs><filter id="bl2"><feGaussianBlur stdDeviation="2.200"/></filter><filter id="bl2b"><feGaussianBlur stdDeviation="7"/></filter>
<linearGradient id="g2" x1="0" y1="0" x2="1" y2=".6"><stop offset="0" stop-color="#858c92"/><stop offset=".3" stop-color="#a9adb2"/><stop offset=".7" stop-color="#bfc1c5"/><stop offset="1" stop-color="#a4abb3"/></linearGradient>
<linearGradient id="hr2" x1="0" y1="0" x2="0" y2="1"><stop offset="0" stop-color="#7f6a58"/><stop offset=".5" stop-color="#a08770"/><stop offset="1" stop-color="#cbb491"/></linearGradient></defs>
<rect width="145" height="108" fill="url(#g2)"/>
<g filter="url(#bl2b)"><ellipse cx="112" cy="52" rx="22" ry="20" fill="#d2d3d8" opacity=".7"/><ellipse cx="20" cy="52" rx="14" ry="10" fill="#c4c6ca"/></g>
<g filter="url(#bl2)"><path d="M2 108c4-9 16-15 34-18h52c18 3 32 9 40 18z" fill="#aaa7cd"/>
<path d="M33 108c3-20 0-38 3-54c3-18 12-31 24-31c13 0 22 11 24.500 28c2 16 1 38 4 57z" fill="url(#hr2)"/>
<path d="M41 58c0-14 8-22 19-22c10 0 17 8 18 21c1 14-4 27-10 33c-3 3-3 8-2 18h-16c1-8 0-13-3-17c-4-6-6-18-6-33z" fill="#cdaba3"/>
<path d="M47 62q5-2 10 0M64 62q5-2 10 0" stroke="#8a6a64" stroke-width="1.500" fill="none"/><ellipse cx="61" cy="80" rx="4" ry="2" fill="#a87f7a"/></g>
</svg>
<div class="b" style="left:1778.2px;top:272px;width:114.7px;height:31.9px;background:rgba(78,78,78,.68);border-radius:6px;"></div><span class="t" style="left:1782.70px;top:280px;font-size:15.6px;color:#fff;transform:scaleX(0.9545);transform-origin:0 0;text-shadow:0 0 .5px #fff;">Анна Вер...</span><svg class="b" style="left:1872px;top:279.5px;" width="16.0" height="18.0" viewBox="0 0 16 18"><rect x="5.500" y="1.500" width="5" height="9" rx="2.500" fill="#fff"/><path d="M3 8.500a5 5 0 0 0 10 0M8 13.500v3" fill="none" stroke="#fff" stroke-width="1.200" stroke-linecap="round"/><path d="M1.500 1.500l13 15" stroke="#6e6e6e" stroke-width="2.600"/><path d="M1.500 1.500l13 15" stroke="#fff" stroke-width="1.100" stroke-linecap="round"/></svg>
<div class="b" style="left:1618.2px;top:319.1px;width:144.7px;height:106.5px;background:linear-gradient(200deg,#e8f3f4 0%,#eff6f5 40%,#f7f8f6 100%);border:1px solid #e1e4e4;border-radius:8px;"></div>
<svg class="b" style="left:1658px;top:339.7px;filter:drop-shadow(0 1px 2px rgba(0,0,0,.18));" width="64" height="64" viewBox="0 0 64 64"><circle cx="32" cy="32" r="30" fill="#969696"/><circle cx="32" cy="24.70" r="6.90" fill="none" stroke="#fff" stroke-width="1.65"/><path d="M19.70 37.30a2.20 2.20 0 0 1 2.20 -2.20h20.20a2.20 2.20 0 0 1 2.20 2.20c0 6.30 -5.50 9.30 -12.30 9.30s-12.30 -3.00 -12.30 -9.30z" fill="none" stroke="#fff" stroke-width="1.65" stroke-linejoin="round"/></svg>
<div class="b" style="left:1628.9px;top:383.9px;width:113.3px;height:31.1px;background:rgba(78,78,78,.68);border-radius:6px;"></div><span class="t" style="left:1633.30px;top:392px;font-size:15.6px;color:#fff;transform:scaleX(0.9670);transform-origin:0 0;text-shadow:0 0 .5px #fff;">Болотов ...</span><svg class="b" style="left:1721.5px;top:391.4px;" width="16.0" height="18.0" viewBox="0 0 16 18"><rect x="5.500" y="1.500" width="5" height="9" rx="2.500" fill="#fff"/><path d="M3 8.500a5 5 0 0 0 10 0M8 13.500v3" fill="none" stroke="#fff" stroke-width="1.200" stroke-linecap="round"/><path d="M1.500 1.500l13 15" stroke="#6e6e6e" stroke-width="2.600"/><path d="M1.500 1.500l13 15" stroke="#fff" stroke-width="1.100" stroke-linecap="round"/></svg>
<div class="b" style="left:1768.2px;top:319.1px;width:144.7px;height:106.5px;background:linear-gradient(200deg,#e8f3f4 0%,#eff6f5 40%,#f7f8f6 100%);border:1px solid #e1e4e4;border-radius:8px;"></div>
<svg class="b" style="left:1808px;top:339.7px;filter:drop-shadow(0 1px 2px rgba(0,0,0,.18));" width="64" height="64" viewBox="0 0 64 64"><circle cx="32" cy="32" r="30" fill="#969696"/><circle cx="32" cy="24.70" r="6.90" fill="none" stroke="#fff" stroke-width="1.65"/><path d="M19.70 37.30a2.20 2.20 0 0 1 2.20 -2.20h20.20a2.20 2.20 0 0 1 2.20 2.20c0 6.30 -5.50 9.30 -12.30 9.30s-12.30 -3.00 -12.30 -9.30z" fill="none" stroke="#fff" stroke-width="1.65" stroke-linejoin="round"/></svg>
<div class="b" style="left:1779px;top:383.9px;width:112.8px;height:31.1px;background:rgba(78,78,78,.68);border-radius:6px;"></div><span class="t" style="left:1783.60px;top:392px;font-size:15.6px;color:#fff;transform:scaleX(0.9494);transform-origin:0 0;text-shadow:0 0 .5px #fff;">Жанна Де...</span><svg class="b" style="left:1871.5px;top:391.4px;" width="16.0" height="18.0" viewBox="0 0 16 18"><rect x="5.500" y="1.500" width="5" height="9" rx="2.500" fill="#fff"/><path d="M3 8.500a5 5 0 0 0 10 0M8 13.500v3" fill="none" stroke="#fff" stroke-width="1.200" stroke-linecap="round"/><path d="M1.500 1.500l13 15" stroke="#6e6e6e" stroke-width="2.600"/><path d="M1.500 1.500l13 15" stroke="#fff" stroke-width="1.100" stroke-linecap="round"/></svg>
<div class="b" style="left:1618.2px;top:431.2px;width:144.7px;height:107px;background:linear-gradient(200deg,#e8f3f4 0%,#eff6f5 40%,#f7f8f6 100%);border:1px solid #e1e4e4;border-radius:8px;"></div>
<svg class="b" style="left:1658px;top:440.1px;filter:drop-shadow(0 1px 2px rgba(0,0,0,.18));" width="64" height="64" viewBox="0 0 64 64"><circle cx="32" cy="32" r="30" fill="#969696"/><circle cx="32" cy="24.70" r="6.90" fill="none" stroke="#fff" stroke-width="1.65"/><path d="M19.70 37.30a2.20 2.20 0 0 1 2.20 -2.20h20.20a2.20 2.20 0 0 1 2.20 2.20c0 6.30 -5.50 9.30 -12.30 9.30s-12.30 -3.00 -12.30 -9.30z" fill="none" stroke="#fff" stroke-width="1.65" stroke-linejoin="round"/></svg>
<div class="b" style="left:1628.9px;top:496px;width:113.3px;height:31.7px;background:rgba(78,78,78,.68);border-radius:6px;"></div><span class="t" style="left:1633.80px;top:504px;font-size:15.6px;color:#fff;transform:scaleX(0.9563);transform-origin:0 0;text-shadow:0 0 .5px #fff;">Фера Світ...</span><svg class="b" style="left:1721.5px;top:503.5px;" width="16.0" height="18.0" viewBox="0 0 16 18"><rect x="5.500" y="1.500" width="5" height="9" rx="2.500" fill="#fff"/><path d="M3 8.500a5 5 0 0 0 10 0M8 13.500v3" fill="none" stroke="#fff" stroke-width="1.200" stroke-linecap="round"/><path d="M1.500 1.500l13 15" stroke="#6e6e6e" stroke-width="2.600"/><path d="M1.500 1.500l13 15" stroke="#fff" stroke-width="1.100" stroke-linecap="round"/></svg>
<div class="b" style="left:1635px;top:514px;width:4px;height:11px;background:#242424;border-radius:1px;"></div>
<div class="b" style="left:1641.5px;top:514px;width:4px;height:11px;background:#242424;border-radius:1px;"></div>
<span class="t" style="left:1658.90px;top:512px;font-size:14.5px;color:#1c1c1c;transform:scaleX(1.0140);transform-origin:0 0;text-shadow:0 0 .4px #1c1c1c;">Утримується</span>
<div class="b" style="left:1768.2px;top:431.2px;width:144.7px;height:107px;background:linear-gradient(200deg,#e8f3f4 0%,#eff6f5 40%,#f7f8f6 100%);border:1px solid #e1e4e4;border-radius:8px;"></div>
<svg class="b" style="left:1808px;top:453px;filter:drop-shadow(0 1px 2px rgba(0,0,0,.18));" width="64" height="64" viewBox="0 0 64 64"><circle cx="32" cy="32" r="30" fill="#969696"/><circle cx="32" cy="24.70" r="6.90" fill="none" stroke="#fff" stroke-width="1.65"/><path d="M19.70 37.30a2.20 2.20 0 0 1 2.20 -2.20h20.20a2.20 2.20 0 0 1 2.20 2.20c0 6.30 -5.50 9.30 -12.30 9.30s-12.30 -3.00 -12.30 -9.30z" fill="none" stroke="#fff" stroke-width="1.65" stroke-linejoin="round"/></svg>
<div class="b" style="left:1779px;top:496px;width:112.8px;height:31.7px;background:rgba(78,78,78,.68);border-radius:6px;"></div><span class="t" style="left:1783.60px;top:504px;font-size:15.6px;color:#fff;text-shadow:0 0 .5px #fff;">Ірина Мо...</span><svg class="b" style="left:1871.5px;top:503.5px;" width="16.0" height="18.0" viewBox="0 0 16 18"><rect x="5.500" y="1.500" width="5" height="9" rx="2.500" fill="#fff"/><path d="M3 8.500a5 5 0 0 0 10 0M8 13.500v3" fill="none" stroke="#fff" stroke-width="1.200" stroke-linecap="round"/><path d="M1.500 1.500l13 15" stroke="#6e6e6e" stroke-width="2.600"/><path d="M1.500 1.500l13 15" stroke="#fff" stroke-width="1.100" stroke-linecap="round"/></svg>
<div class="b" style="left:1618.2px;top:544.3px;width:144.7px;height:106.4px;background:linear-gradient(200deg,#e8f3f4 0%,#eff6f5 40%,#f7f8f6 100%);border:1px solid #e1e4e4;border-radius:8px;"></div>
<svg class="b" style="left:1658px;top:564.6px;filter:drop-shadow(0 1px 2px rgba(0,0,0,.18));" width="64" height="64" viewBox="0 0 64 64"><circle cx="32" cy="32" r="30" fill="#969696"/><circle cx="32" cy="24.70" r="6.90" fill="none" stroke="#fff" stroke-width="1.65"/><path d="M19.70 37.30a2.20 2.20 0 0 1 2.20 -2.20h20.20a2.20 2.20 0 0 1 2.20 2.20c0 6.30 -5.50 9.30 -12.30 9.30s-12.30 -3.00 -12.30 -9.30z" fill="none" stroke="#fff" stroke-width="1.65" stroke-linejoin="round"/></svg>
<div class="b" style="left:1628.9px;top:609px;width:113.3px;height:30.9px;background:rgba(78,78,78,.68);border-radius:6px;"></div><span class="t" style="left:1633.80px;top:616px;font-size:15.6px;color:#fff;transform:scaleX(0.9437);transform-origin:0 0;text-shadow:0 0 .5px #fff;">Захаріна ...</span><svg class="b" style="left:1721.5px;top:616.5px;" width="16.0" height="18.0" viewBox="0 0 16 18"><rect x="5.500" y="1.500" width="5" height="9" rx="2.500" fill="#fff"/><path d="M3 8.500a5 5 0 0 0 10 0M8 13.500v3" fill="none" stroke="#fff" stroke-width="1.200" stroke-linecap="round"/><path d="M1.500 1.500l13 15" stroke="#6e6e6e" stroke-width="2.600"/><path d="M1.500 1.500l13 15" stroke="#fff" stroke-width="1.100" stroke-linecap="round"/></svg>
<svg class="b" style="left:1768.100px;top:544.100px;border-radius:8px;" width="144.700" height="106.700" viewBox="0 0 145 107">
<defs><filter id="bl3"><feGaussianBlur stdDeviation="2.200"/></filter><filter id="bl3b"><feGaussianBlur stdDeviation="1"/></filter>
<pattern id="st" width="15" height="12" patternUnits="userSpaceOnUse" patternTransform="rotate(-4)"><rect width="15" height="12" fill="#3e301e"/><rect x=".8" y=".8" width="6.200" height="4.600" rx="1.800" fill="#8e7850"/><rect x="8.300" y="1" width="5.800" height="4.200" rx="1.800" fill="#766142"/><rect x="3.500" y="6.800" width="7" height="4.400" rx="1.800" fill="#9a8258"/><rect x="11.800" y="6.800" width="3.200" height="4.400" rx="1" fill="#66533a"/><rect x="0" y="6.800" width="2.200" height="4.400" rx="1" fill="#66533a"/></pattern>
<pattern id="st2" width="9" height="7" patternUnits="userSpaceOnUse" patternTransform="rotate(-8)"><rect width="9" height="7" fill="#4a3c22"/><rect x=".6" y=".6" width="7.600" height="5.600" fill="#8c7c4c"/></pattern>
<linearGradient id="sw3" x1="0" y1="0" x2="0" y2="1"><stop offset="0" stop-color="#8a8f98"/><stop offset="1" stop-color="#c9ccd0"/></linearGradient></defs>
<rect width="145" height="107" fill="#3a2c1e"/>
<rect x="0" y="0" width="16" height="70" fill="url(#st2)" filter="url(#bl3b)"/>
<rect x="26" y="8" width="119" height="92" fill="url(#st)" filter="url(#bl3b)"/>
<rect x="0" y="0" width="145" height="107" fill="#5a4426" opacity=".42"/>
<path d="M14 0l12 8v99h-8z" fill="#2c2116"/><path d="M24 5h121v4h-121z" fill="#3a2a18"/><rect x="96.500" y="6" width="4" height="100" fill="#33261a"/>
<g filter="url(#bl3)"><ellipse cx="40" cy="28" rx="14" ry="10" fill="#2d4a3a"/><ellipse cx="62" cy="30" rx="10" ry="7" fill="#2b4234"/><ellipse cx="34" cy="40" rx="10" ry="7" fill="#2a3c2e"/><circle cx="52.500" cy="31.500" r="4" fill="#9a9d98"/><ellipse cx="25" cy="44" rx="7" ry="4" fill="#b4503e"/><ellipse cx="38" cy="63" rx="11" ry="5" fill="#35483a"/>
<path d="M0 56c10 0 22 6 28 20c4 10 3 22 0 31h-28z" fill="#1c261e"/><ellipse cx="41" cy="100" rx="9" ry="4.500" fill="#b04c3a"/><ellipse cx="60" cy="104" rx="10" ry="4" fill="#3c4a38"/>
<path d="M108 107c-2-30-2-60 6-78c5-11 18-14 31-10v88z" fill="#3a2b29"/><path d="M116 40c1-12 10-18 22-17c5 .5 7 2 7 4v40c-4 6-12 8-18 5c-8-5-12-18-11-32z" fill="#b8958d"/><path d="M119 42q6-3 11-1M136 41q4-2 8 0" stroke="#5a4440" stroke-width="1.600" fill="none"/>
<path d="M80 107c0-18 6-32 20-37c8-2 16 2 22 8c6 8 8 18 8 29z" fill="url(#sw3)"/><path d="M124 72c6 8 10 20 11 35h10v-40c-6 4-14 6-21 5z" fill="#4a3a38"/></g>
</svg>
<div class="b" style="left:1778.2px;top:610px;width:114.7px;height:31.9px;background:rgba(78,78,78,.68);border-radius:6px;"></div><span class="t" style="left:1782.70px;top:618px;font-size:15.6px;color:#fff;transform:scaleX(0.9842);transform-origin:0 0;text-shadow:0 0 .5px #fff;">Мекшун А...</span><svg class="b" style="left:1872px;top:617.5px;" width="16.0" height="18.0" viewBox="0 0 16 18"><rect x="5.500" y="1.500" width="5" height="9" rx="2.500" fill="#fff"/><path d="M3 8.500a5 5 0 0 0 10 0M8 13.500v3" fill="none" stroke="#fff" stroke-width="1.200" stroke-linecap="round"/><path d="M1.500 1.500l13 15" stroke="#6e6e6e" stroke-width="2.600"/><path d="M1.500 1.500l13 15" stroke="#fff" stroke-width="1.100" stroke-linecap="round"/></svg>
<div class="b" style="left:1693.3px;top:656.2px;width:144.5px;height:107.1px;background:linear-gradient(200deg,#e8f3f4 0%,#eff6f5 40%,#f7f8f6 100%);border:1px solid #e1e4e4;border-radius:8px;"></div>
<svg class="b" style="left:1732.9px;top:677.6px;filter:drop-shadow(0 1px 2px rgba(0,0,0,.18));" width="64" height="64" viewBox="0 0 64 64"><circle cx="32" cy="32" r="30" fill="#969696"/><circle cx="32" cy="24.70" r="6.90" fill="none" stroke="#fff" stroke-width="1.65"/><path d="M19.70 37.30a2.20 2.20 0 0 1 2.20 -2.20h20.20a2.20 2.20 0 0 1 2.20 2.20c0 6.30 -5.50 9.30 -12.30 9.30s-12.30 -3.00 -12.30 -9.30z" fill="none" stroke="#fff" stroke-width="1.65" stroke-linejoin="round"/></svg>
<div class="b" style="left:1704px;top:721px;width:113px;height:31.7px;background:rgba(78,78,78,.68);border-radius:6px;"></div><span class="t" style="left:1708.90px;top:729px;font-size:15.6px;color:#fff;transform:scaleX(0.9670);transform-origin:0 0;text-shadow:0 0 .5px #fff;">Парубець...</span><svg class="b" style="left:1796.5px;top:728.5px;" width="16.0" height="18.0" viewBox="0 0 16 18"><rect x="5.500" y="1.500" width="5" height="9" rx="2.500" fill="#fff"/><path d="M3 8.500a5 5 0 0 0 10 0M8 13.500v3" fill="none" stroke="#fff" stroke-width="1.200" stroke-linecap="round"/><path d="M1.500 1.500l13 15" stroke="#6e6e6e" stroke-width="2.600"/><path d="M1.500 1.500l13 15" stroke="#fff" stroke-width="1.100" stroke-linecap="round"/></svg>
<div class="b" style="left:1615px;top:766px;width:299px;height:43px;background:#f3f3f3;"></div>
<svg class="b" style="left:1725px;top:780px;" width="14" height="18" viewBox="0 0 14 18"><path d="M10.500 2l-7 7l7 7" fill="none" stroke="#bdbdbd" stroke-width="1.500" stroke-linecap="round" stroke-linejoin="round"/></svg>
<span class="t" style="left:1753.30px;top:781px;font-size:17px;color:#242424;transform:scaleX(1.0367);transform-origin:0 0;">1/2</span>
<svg class="b" style="left:1792px;top:780px;" width="14" height="18" viewBox="0 0 14 18"><path d="M3.500 2l7 7l-7 7" fill="none" stroke="#242424" stroke-width="1.500" stroke-linecap="round" stroke-linejoin="round"/></svg>
<div class="b" style="left:1618.2px;top:814.4px;width:294.7px;height:162.1px;background:linear-gradient(200deg,#e8f3f4 0%,#eff6f5 40%,#f7f8f6 100%);border:1px solid #e1e4e4;border-radius:8px;"></div>
<svg class="b" style="left:1723px;top:852.5px;filter:drop-shadow(0 1px 2px rgba(0,0,0,.18));" width="84" height="84" viewBox="0 0 84 84"><circle cx="42" cy="42" r="40" fill="#969696"/><circle cx="42" cy="32.27" r="9.20" fill="none" stroke="#fff" stroke-width="2.20"/><path d="M25.60 49.07a2.93 2.93 0 0 1 2.93 -2.93h26.93a2.93 2.93 0 0 1 2.93 2.93c0 8.40 -7.33 12.40 -16.40 12.40s-16.40 -4.00 -16.40 -12.40z" fill="none" stroke="#fff" stroke-width="2.20" stroke-linejoin="round"/></svg>
<div class="b" style="left:1629px;top:935.4px;width:69.8px;height:30.6px;background:rgba(78,78,78,.68);border-radius:5px;"></div>
<span class="t" style="left:1634.00px;top:943px;font-size:15.6px;color:#fff;transform:scaleX(0.9418);transform-origin:0 0;text-shadow:0 0 .5px #fff;">Ольга</span>
<svg class="b" style="left:1679px;top:942.5px;" width="15.2" height="17.1" viewBox="0 0 16 18"><rect x="5.500" y="1.500" width="5" height="9" rx="2.500" fill="#fff"/><path d="M3 8.500a5 5 0 0 0 10 0M8 13.500v3" fill="none" stroke="#fff" stroke-width="1.200" stroke-linecap="round"/><path d="M1.500 1.500l13 15" stroke="#6e6e6e" stroke-width="2.600"/><path d="M1.500 1.500l13 15" stroke="#fff" stroke-width="1.100" stroke-linecap="round"/></svg>
<!-- s_taskbar -->
<svg class="b" style="left:26px;top:1035px;" width="32" height="30" viewBox="0 0 32 30"><defs><radialGradient id="sun" cx=".4" cy=".35" r=".7"><stop offset="0" stop-color="#ffc44a"/><stop offset="1" stop-color="#ee7a1a"/></radialGradient><linearGradient id="cl" x1="0" y1="0" x2="0" y2="1"><stop offset="0" stop-color="#f4f8ff"/><stop offset="1" stop-color="#a9c3ec"/></linearGradient></defs><circle cx="13.500" cy="14" r="12.300" fill="url(#sun)"/><path d="M15 24.500h11.500a4 4 0 0 0 .5-7.950a5.200 5.200 0 0 0-9.800-1.300a4.700 4.700 0 0 0-2.200 9.250z" fill="url(#cl)"/></svg>
<span class="t" style="left:64.00px;top:1033px;font-size:14.6px;color:#1f1f1f;transform:scaleX(0.9876);transform-origin:0 0;">-7°C</span>
<span class="t" style="left:64.00px;top:1052px;font-size:14.6px;color:#454545;transform:scaleX(1.0505);transform-origin:0 0;">Mostly sunny</span>
<svg class="b" style="left:557px;top:1035px;" width="32" height="32" viewBox="0 0 32 32"><defs><linearGradient id="wn" gradientUnits="userSpaceOnUse" x1="1" y1="1" x2="30" y2="30"><stop offset="0" stop-color="#52c6f8"/><stop offset=".5" stop-color="#1f98ea"/><stop offset="1" stop-color="#0a74d2"/></linearGradient></defs><rect x="1" y="1" width="14.100" height="14.100" rx="1" fill="url(#wn)"/><rect x="16.200" y="1" width="14.100" height="14.100" rx="1" fill="url(#wn)"/><rect x="1" y="16.200" width="14.100" height="14.100" rx="1" fill="url(#wn)"/><rect x="16.200" y="16.200" width="14.100" height="14.100" rx="1" fill="url(#wn)"/></svg>
<div class="b" style="left:604px;top:1031px;width:273px;height:40px;background:rgba(255,255,255,.62);border-radius:20px;border:1px solid rgba(255,255,255,.8);box-shadow:0 0 0 .5px rgba(0,0,0,.06);"></div>
<svg class="b" style="left:615px;top:1039px;" width="24" height="24" viewBox="0 0 24 24"><circle cx="10" cy="10" r="6.800" fill="none" stroke="#1f1f1f" stroke-width="2"/><path d="M15 15l5.500 5.500" stroke="#1f1f1f" stroke-width="2.200" stroke-linecap="round"/></svg>
<span class="t" style="left:649.50px;top:1043px;font-size:16.3px;color:#4a4a4a;transform:scaleX(1.0887);transform-origin:0 0;">Пошук</span>
<svg class="b" style="left:810px;top:1033px;" width="62" height="36" viewBox="0 0 62 36"><defs><filter id="blp"><feGaussianBlur stdDeviation=".5"/></filter><linearGradient id="sky" x1="0" y1="0" x2="0" y2="1"><stop offset="0" stop-color="#d9d3c6"/><stop offset=".6" stop-color="#f0cf9e"/><stop offset="1" stop-color="#e8a36a"/></linearGradient></defs><g filter="url(#blp)"><ellipse cx="33" cy="24" rx="27" ry="9" fill="url(#sky)"/><ellipse cx="46" cy="17" rx="12" ry="9" fill="#dcd6c8"/><path d="M19 19q13-9 26 0v3h-26z" fill="#8f8a7c"/><rect x="17" y="20" width="32" height="8" fill="#b9b2a2"/><path d="M19 20v9M23 20v9M27 20v9M31 20v9M35 20v9M39 20v9M43 20v9M47 20v9" stroke="#4c463c" stroke-width=".9"/><path d="M8 30q24-5 50 0v2.500h-50z" fill="#2f7a78"/><path d="M6 29q10-3 22-1l-2 3h-20z" fill="#d88a4a"/></g><ellipse cx="12.4" cy="11.0" rx="0.63" ry="0.52" fill="#4a4a48"/><ellipse cx="41.1" cy="5.1" rx="0.87" ry="0.48" fill="#4a4a48"/><ellipse cx="10.0" cy="11.2" rx="1.01" ry="0.64" fill="#4a4a48"/><ellipse cx="34.2" cy="5.7" rx="0.97" ry="0.66" fill="#4a4a48"/><ellipse cx="36.8" cy="6.5" rx="0.85" ry="0.45" fill="#4a4a48"/><ellipse cx="21.4" cy="10.3" rx="0.87" ry="0.49" fill="#4a4a48"/><ellipse cx="39.8" cy="8.3" rx="0.85" ry="0.52" fill="#4a4a48"/><ellipse cx="27.5" cy="4.8" rx="1.01" ry="0.41" fill="#4a4a48"/><ellipse cx="7.3" cy="14.2" rx="0.84" ry="0.50" fill="#4a4a48"/><ellipse cx="41.7" cy="2.4" rx="0.92" ry="0.48" fill="#4a4a48"/><ellipse cx="19.5" cy="8.8" rx="1.05" ry="0.43" fill="#4a4a48"/><ellipse cx="6.3" cy="16.2" rx="0.72" ry="0.50" fill="#4a4a48"/><ellipse cx="11.6" cy="10.2" rx="1.05" ry="0.69" fill="#4a4a48"/><ellipse cx="34.8" cy="2.5" rx="1.08" ry="0.63" fill="#4a4a48"/><ellipse cx="22.4" cy="9.6" rx="0.75" ry="0.46" fill="#4a4a48"/><ellipse cx="20.4" cy="7.9" rx="0.77" ry="0.40" fill="#4a4a48"/><ellipse cx="5.4" cy="16.7" rx="0.75" ry="0.43" fill="#4a4a48"/><ellipse cx="42.0" cy="1.0" rx="0.63" ry="0.45" fill="#4a4a48"/><ellipse cx="29.3" cy="3.3" rx="0.72" ry="0.70" fill="#4a4a48"/><ellipse cx="9.8" cy="14.9" rx="1.09" ry="0.54" fill="#4a4a48"/><ellipse cx="13.8" cy="9.1" rx="0.72" ry="0.67" fill="#4a4a48"/><ellipse cx="36.6" cy="2.5" rx="0.72" ry="0.46" fill="#4a4a48"/><ellipse cx="15.3" cy="9.8" rx="1.06" ry="0.57" fill="#4a4a48"/><ellipse cx="42.3" cy="6.7" rx="1.00" ry="0.62" fill="#4a4a48"/><ellipse cx="22.2" cy="6.4" rx="1.05" ry="0.68" fill="#4a4a48"/><ellipse cx="18.4" cy="11.5" rx="1.01" ry="0.56" fill="#4a4a48"/><ellipse cx="30.6" cy="4.7" rx="1.08" ry="0.42" fill="#4a4a48"/><ellipse cx="43.7" cy="3.3" rx="1.05" ry="0.44" fill="#4a4a48"/><ellipse cx="42.5" cy="0.8" rx="0.92" ry="0.57" fill="#4a4a48"/><ellipse cx="35.1" cy="3.4" rx="1.06" ry="0.40" fill="#4a4a48"/><ellipse cx="36.8" cy="8.0" rx="1.04" ry="0.57" fill="#4a4a48"/><ellipse cx="37.2" cy="5.5" rx="1.05" ry="0.63" fill="#4a4a48"/><ellipse cx="23.0" cy="5.8" rx="0.90" ry="0.55" fill="#4a4a48"/><ellipse cx="38.3" cy="3.1" rx="0.98" ry="0.56" fill="#4a4a48"/><ellipse cx="6.8" cy="18.0" rx="0.87" ry="0.51" fill="#4a4a48"/><ellipse cx="34.2" cy="3.0" rx="1.08" ry="0.43" fill="#4a4a48"/><ellipse cx="9.8" cy="15.6" rx="0.82" ry="0.66" fill="#4a4a48"/><ellipse cx="32.8" cy="6.3" rx="0.75" ry="0.65" fill="#4a4a48"/><ellipse cx="22.2" cy="7.1" rx="0.69" ry="0.44" fill="#4a4a48"/><ellipse cx="23.1" cy="8.1" rx="0.96" ry="0.40" fill="#4a4a48"/><ellipse cx="17.0" cy="10.3" rx="0.84" ry="0.42" fill="#4a4a48"/><ellipse cx="15.7" cy="10.7" rx="1.09" ry="0.59" fill="#4a4a48"/><ellipse cx="31.2" cy="4.7" rx="0.83" ry="0.67" fill="#4a4a48"/><ellipse cx="18.1" cy="11.9" rx="0.82" ry="0.44" fill="#4a4a48"/><ellipse cx="33.7" cy="5.3" rx="0.64" ry="0.44" fill="#4a4a48"/><ellipse cx="34.5" cy="7.6" rx="0.89" ry="0.51" fill="#4a4a48"/></svg>
<svg class="b" style="left:892px;top:1035px;" width="36" height="32" viewBox="0 0 36 32"><rect x="10" y="2" width="22" height="19" rx="3" fill="#f2f2f2" stroke="#dcdcdc"/><rect x="2" y="9" width="22" height="19" rx="3" fill="#222"/><rect x="2" y="9" width="22" height="19" rx="3" fill="none" stroke="#444"/></svg>
<svg class="b" style="left:948px;top:1035px;" width="32" height="32" viewBox="0 0 32 32"><defs><linearGradient id="mt" x1="0" y1="0" x2="1" y2="1"><stop offset="0" stop-color="#8a7df0"/><stop offset="1" stop-color="#4c46b8"/></linearGradient></defs><path d="M16 2.500a13.500 13.500 0 1 1-6.800 25.200l-6 1.600l1.700-5.700a13.500 13.500 0 0 1 11.100-21.100z" fill="url(#mt)"/><rect x="8" y="11" width="11" height="10" rx="2.500" fill="#fff"/><path d="M20 14.500l4.500-2.800v8.600l-4.500-2.800z" fill="#fff"/></svg>
<svg class="b" style="left:1002px;top:1034px;" width="34" height="34" viewBox="0 0 34 34"><defs><linearGradient id="tc1" x1=".2" y1="0" x2=".5" y2="1"><stop offset="0" stop-color="#1f7fe0"/><stop offset=".3" stop-color="#2aa7e8"/><stop offset=".55" stop-color="#5ccf8a"/><stop offset=".8" stop-color="#f0c53a"/><stop offset="1" stop-color="#f07a2a"/></linearGradient><linearGradient id="tc2" x1=".7" y1="0" x2=".3" y2="1"><stop offset="0" stop-color="#5a8cf0"/><stop offset=".35" stop-color="#b06ae8"/><stop offset=".7" stop-color="#f0609a"/><stop offset="1" stop-color="#f2703a"/></linearGradient></defs>
<path d="M11 2.500h8.500c2.300 0 3.700 1.200 4.300 3.200l1.200 3.700h-5.200c-2.300 0-3.800 1.400-4.500 3.700l-3.200 11.200c-.7 2.300-2 4-4.600 4h-3c-3.200 0-4.600-2.500-3.700-5.700l2.900-12.600c.9-3.700 3.200-7.500 7.300-7.500z" fill="url(#tc1)"/>
<path d="M23 31.500h-8.500c-2.300 0-3.700-1.200-4.300-3.200l-1.200-3.700h5.200c2.300 0 3.800-1.400 4.500-3.700l3.200-11.200c.7-2.300 2-4 4.600-4h3c3.200 0 4.600 2.500 3.700 5.700l-2.900 12.600c-.9 3.700-3.200 7.500-7.300 7.500z" fill="url(#tc2)"/></svg>
<svg class="b" style="left:1056px;top:1036px;" width="36" height="30" viewBox="0 0 36 30"><path d="M2 4a2 2 0 0 1 2-2h9l3.500 3.500h15.500a2 2 0 0 1 2 2v3h-32z" fill="#e8a520"/><rect x="2" y="8" width="32" height="19" rx="2" fill="#fcd354"/><rect x="2" y="20" width="32" height="7" rx="2" fill="#f3bb35"/><rect x="12" y="22" width="12" height="4" rx="1" fill="#2b7bd6"/></svg>
<div class="b" style="left:1069px;top:1071px;width:9px;height:3px;background:#8a8d86;border-radius:2px;"></div>
<div class="b" style="left:1104px;top:1027px;width:50px;height:47px;background:rgba(255,255,255,.55);border-radius:6px;border:1px solid rgba(255,255,255,.6);"></div>
<svg class="b" style="left:1113px;top:1034px;" width="34" height="34" viewBox="0 0 34 34"><defs><linearGradient id="ed1" x1="0" y1="0" x2="0" y2="1"><stop offset="0" stop-color="#1a8fe0"/><stop offset="1" stop-color="#0c4f9a"/></linearGradient><linearGradient id="ed2" x1="0" y1=".5" x2="1" y2=".2"><stop offset="0" stop-color="#2aa8e8"/><stop offset=".55" stop-color="#3fc987"/><stop offset="1" stop-color="#8fdc4a"/></linearGradient></defs>
<path d="M30.500 24.500c-1.500 .8-3.300 1.300-5.300 1.300c-5 0-9.200-3.300-9.200-7.600c0-2.100 1.200-3.700 2.900-4.600c-5.800.2-9.900 4.500-9.900 9.200c0 6 5.500 9.700 10.500 9.700c5 0 9.500-3.200 11.900-7.200c.4-.7-.2-1.200-.9-.8z" fill="url(#ed1)"/>
<path d="M13.500 30.200c-3.400-2.200-5.300-6.200-5-10.200c.4-5 4.400-9.500 10.400-9.500c4.500 0 7.800 2.800 7.800 6.300c0 1.800-1 3-2.200 3.900c-.4.300-.2.800.3.900c.9.200 2.100.2 3.400-.3c2.800-1.100 4.300-3.900 4.300-6.800c0-7.500-7.300-12.500-15.500-12.500c-8.800 0-15 7.200-15 15c0 7 4.500 12.400 11.500 13.200z" fill="url(#ed2)"/>
<path d="M2 17c0-6.500 5-11 11.500-11c-4.500 1.500-7.500 5.500-7.500 10.500c0 6 3.500 11.500 9 13.500c-7-.3-13-5.500-13-13z" fill="#1b7fd6" opacity=".85"/></svg>
<div class="b" style="left:1120px;top:1070px;width:20px;height:3.5px;background:#2a74d8;border-radius:2px;"></div>
<svg class="b" style="left:1168px;top:1034px;" width="34" height="34" viewBox="0 0 34 34"><path d="M11 8v-2.500a3 3 0 0 1 3-3h6a3 3 0 0 1 3 3v2.500" fill="none" stroke="#3aa0e8" stroke-width="2.400"/><rect x="2" y="8" width="30" height="23" rx="3.500" fill="#1a4f8c"/><rect x="2" y="8" width="30" height="6" rx="3" fill="#1f62ad"/><rect x="10" y="13" width="6.200" height="6.200" fill="#f25022"/><rect x="17.600" y="13" width="6.200" height="6.200" fill="#7fba00"/><rect x="10" y="20.600" width="6.200" height="6.200" fill="#00a4ef"/><rect x="17.600" y="20.600" width="6.200" height="6.200" fill="#ffb900"/></svg>
<svg class="b" style="left:1222px;top:1033px;" width="32" height="32" viewBox="0 0 32 32"><path d="M2.500 1.500h24l3 3v25h-27z" fill="#f4f8fd" stroke="#8fb0dc" stroke-width="1"/><path d="M2.500 1.500h27v4h-27z" fill="#cfe0f4"/><text x="14.500" y="21" font-size="19" font-weight="bold" fill="#1e57b0" text-anchor="middle" font-family="Liberation Sans,sans-serif" transform="scale(1.150 1)" stroke="#1e57b0" stroke-width=".5">W</text><path d="M12 23l16-3.500l2 7l-15 4z" fill="#fff" stroke="#a9bbdc" stroke-width=".8"/><path d="M15 25.500l11-2.500M16 28l11-2.700" stroke="#9bb4dc" stroke-width=".8"/></svg>
<div class="b" style="left:1234px;top:1071px;width:9px;height:3px;background:#8a8d86;border-radius:2px;"></div>
<svg class="b" style="left:1278px;top:1028.5px;" width="40" height="40" viewBox="0 0 40 40"><circle cx="17" cy="22" r="14.500" fill="#fff"/><path d="M17 7.500a14.500 14.500 0 0 1 12.560 7.250h-12.560a7.250 7.250 0 0 0-6.280 3.630l-6.280-3.630a14.500 14.500 0 0 1 12.560-7.250z" fill="#e94235"/><path d="M29.560 14.750a14.500 14.500 0 0 1-12.560 21.750l6.280-10.880a7.250 7.250 0 0 0 0-7.250z" fill="#fbbc04"/><path d="M17 36.500a14.500 14.500 0 0 1-12.560-21.750l6.280 10.880a7.250 7.250 0 0 0 6.280 3.620l-.0 7.250z" fill="#34a853"/><circle cx="17" cy="22" r="5.800" fill="#4285f4" stroke="#fff" stroke-width="1.500"/><circle cx="29" cy="9" r="8.500" fill="#5c35b0" stroke="#e8e0ff" stroke-width="1.200"/><text x="29" y="12.600" font-size="10" font-weight="bold" fill="#fff" text-anchor="middle" font-family="Liberation Sans,sans-serif">О</text></svg>
<div class="b" style="left:1289px;top:1071px;width:9px;height:3px;background:#8a8d86;border-radius:2px;"></div>
<svg class="b" style="left:1334px;top:1034px;" width="30" height="30" viewBox="0 0 30 30"><rect x="1" y="1" width="28" height="28" rx="4" fill="#b30b00"/><path d="M7 21.800c1.800-1.400 5.300-2.800 8.600-3.400c3-.6 6.300-.5 7.400.6c.8.900-.2 1.900-2 1.500c-3.300-.8-6.200-4.500-7.200-8c-.7-2.500-.7-5 .2-5.500c1.100-.5 1.700 1.300 1.300 3.800c-.6 3.700-3 8.500-5.300 10.800c-1.300 1.300-2.700 1.700-3.200 1c-.3-.4-.2-.7.200-.8z" fill="none" stroke="#fff" stroke-width="1.400" stroke-linejoin="round"/></svg>
<div class="b" style="left:1344px;top:1071px;width:9px;height:3px;background:#8a8d86;border-radius:2px;"></div>
<svg class="b" style="left:1560px;top:1042px;" width="16" height="14" viewBox="0 0 16 14"><path d="M2 10l6-6l6 6" fill="none" stroke="#1f1f1f" stroke-width="1.600" stroke-linecap="round" stroke-linejoin="round"/></svg>
<svg class="b" style="left:1599px;top:1039.5px;" width="18" height="21.6" viewBox="0 0 20 24"><rect x="6.500" y="2" width="7" height="12.500" rx="3.500" fill="none" stroke="#1c5fa8" stroke-width="1.700"/><path d="M3.500 11.500a6.500 6.500 0 0 0 13 0M10 18.500v4" fill="none" stroke="#1c5fa8" stroke-width="1.700" stroke-linecap="round"/></svg>
<span class="t" style="left:1642.50px;top:1045px;font-size:14.5px;color:#1f1f1f;transform:scaleX(0.9514);transform-origin:0 0;">УКР</span>
<svg class="b" style="left:1692px;top:1040px;" width="22" height="18" viewBox="0 0 22 18"><path d="M2 7.500a13 13 0 0 1 18 0M5 10.800a8.700 8.700 0 0 1 12 0M8 14a4.300 4.300 0 0 1 6 0" fill="none" stroke="#1f1f1f" stroke-width="1.600" stroke-linecap="round"/><circle cx="11" cy="16.300" r="1.400" fill="#1f1f1f"/></svg>
<svg class="b" style="left:1722px;top:1040px;" width="24" height="18" viewBox="0 0 24 18"><path d="M2 6.500h3.500l4.500-4v13l-4.500-4h-3.500z" fill="none" stroke="#1f1f1f" stroke-width="1.400" stroke-linejoin="round"/><path d="M12.500 6a4.500 4.500 0 0 1 0 6" fill="none" stroke="#1f1f1f" stroke-width="1.300" stroke-linecap="round"/><path d="M15 3.800a7.800 7.800 0 0 1 0 10.400" fill="none" stroke="#9a9a9a" stroke-width="1.300" stroke-linecap="round"/><path d="M17.500 1.800a11 11 0 0 1 0 14.400" fill="none" stroke="#b8b8b8" stroke-width="1.300" stroke-linecap="round"/></svg>
<svg class="b" style="left:1753px;top:1042px;" width="21.1" height="14.1" viewBox="0 0 24 16"><rect x="1" y="2.500" width="18.500" height="11" rx="3" fill="none" stroke="#1f1f1f" stroke-width="1.500"/><rect x="3.500" y="5" width="12" height="6" rx="1.300" fill="#1f1f1f"/><path d="M21.300 6v4" stroke="#1f1f1f" stroke-width="1.800" stroke-linecap="round"/></svg>
<span class="t" style="left:1829.01px;top:1033px;font-size:14.5px;color:#1f1f1f;transform:scaleX(0.9646);transform-origin:100% 0;">14:01</span>
<span class="t" style="left:1792.73px;top:1052px;font-size:14.5px;color:#1f1f1f;transform:scaleX(0.9756);transform-origin:100% 0;">24.12.2025</span>
<svg class="b" style="left:1875px;top:1038px;" width="24" height="24" viewBox="0 0 24 24"><path d="M4 17.500c1.500-1.500 2.200-3 2.200-6.500a5.300 5.300 0 0 1 10.600 0c0 3.500.7 5 2.200 6.500z" fill="#1f1f1f"/><path d="M9 19.500a2.600 2.600 0 0 0 5 0z" fill="#1f1f1f"/><text x="8.300" y="14.800" font-size="8" font-weight="bold" fill="#fff" font-family="Liberation Sans,sans-serif">z</text><text x="15.500" y="8.500" font-size="10.500" font-weight="bold" fill="#1f1f1f" font-family="Liberation Sans,sans-serif">z</text></svg>
</body></html>
